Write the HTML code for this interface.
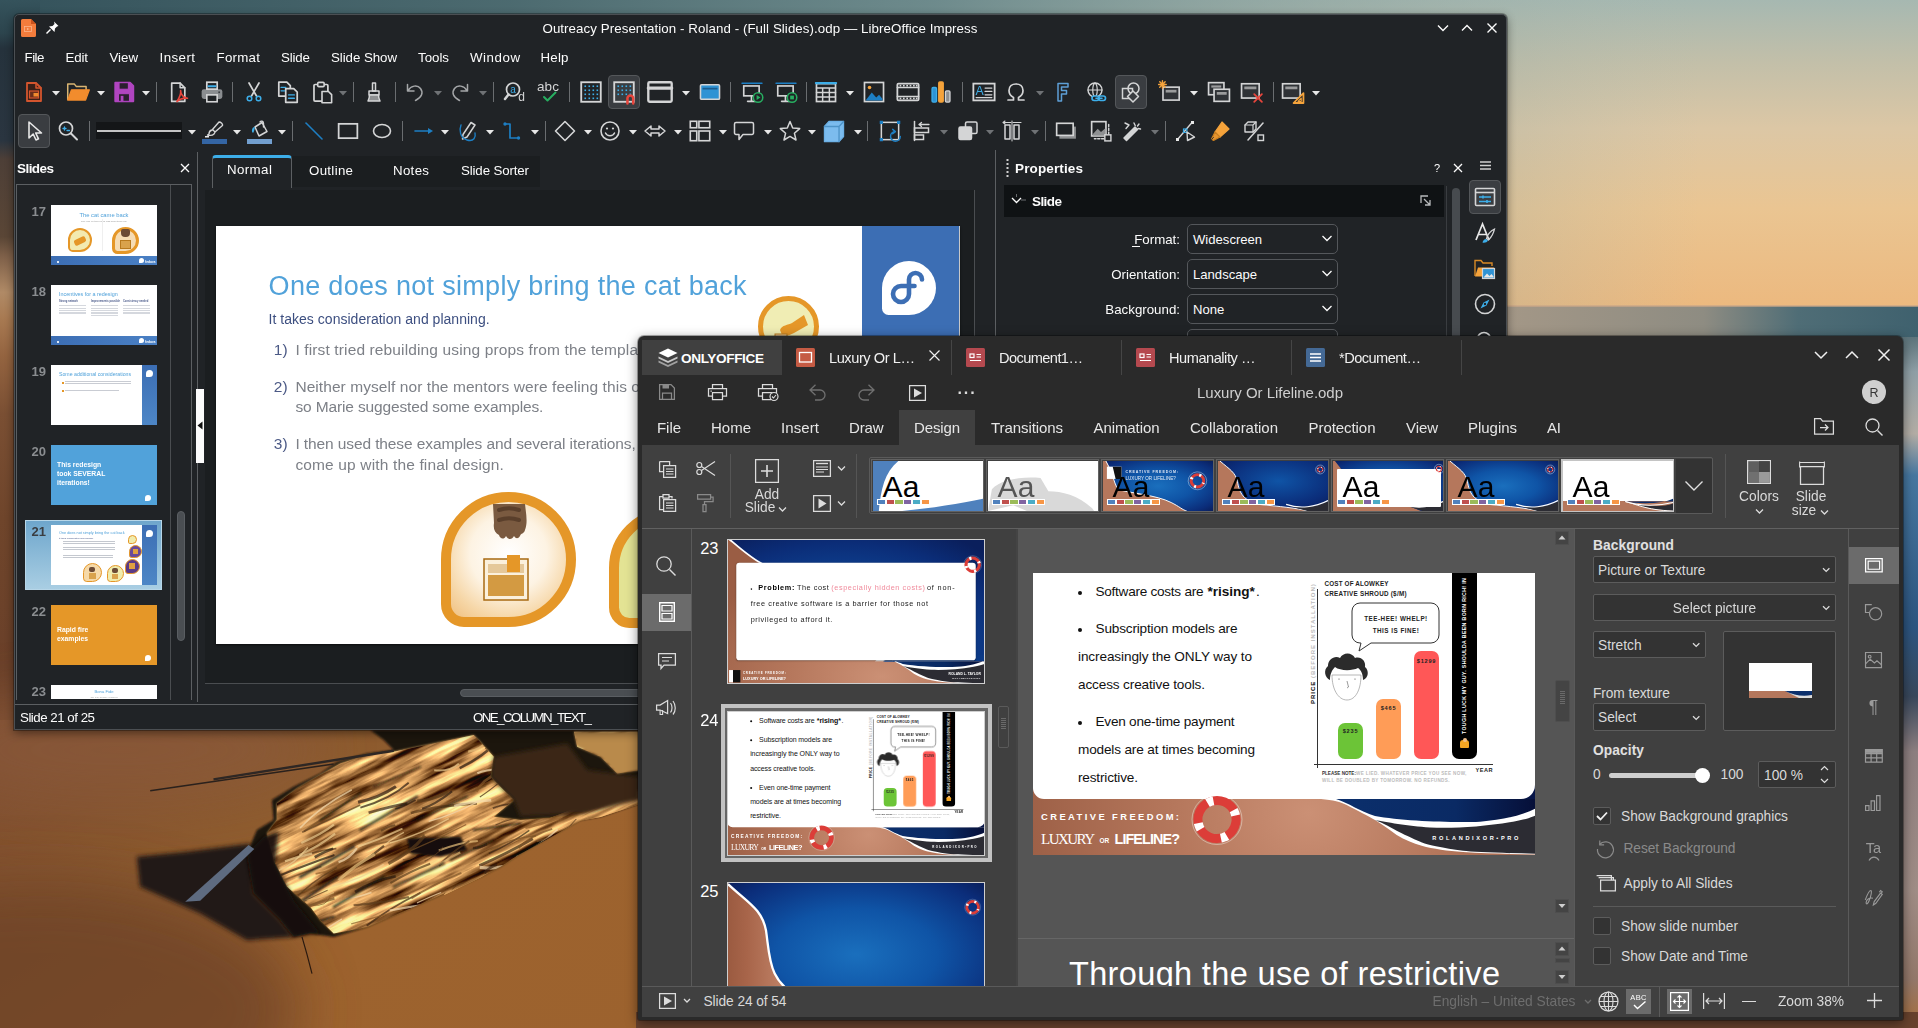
<!DOCTYPE html>
<html lang="en"><head><meta charset="utf-8"><title>Desktop</title>
<style>html,body{margin:0;padding:0;background:#6b4a30;}#root{position:relative;width:1918px;height:1028px;overflow:hidden;font-family:"Liberation Sans",sans-serif;}#root *{box-sizing:border-box;}svg{overflow:visible}</style></head>
<body><div id="root">
<svg style="position:absolute;left:0px;top:0px;" width="1918" height="1028" viewBox="0 0 1918 1028"><defs>
<linearGradient id="sky" x1="0" y1="0" x2="0" y2="1">
 <stop offset="0" stop-color="#a6b8b1"/><stop offset=".2" stop-color="#c2bfa9"/><stop offset=".42" stop-color="#dcc7a5"/>
 <stop offset=".68" stop-color="#eac592"/><stop offset="1" stop-color="#ecb97f"/></linearGradient>
<linearGradient id="skyL" x1="0" y1="0" x2="1" y2="0">
 <stop offset="0" stop-color="#34525b" stop-opacity="1"/><stop offset=".3" stop-color="#47666c" stop-opacity=".95"/>
 <stop offset=".55" stop-color="#5f7f83" stop-opacity=".8"/><stop offset=".8" stop-color="#8da39f" stop-opacity=".45"/>
 <stop offset="1" stop-color="#a6b8b1" stop-opacity="0"/></linearGradient>
<linearGradient id="sand" x1="0" y1="0" x2="1" y2=".25">
 <stop offset="0" stop-color="#7d4d31"/><stop offset=".1" stop-color="#83522f"/><stop offset=".2" stop-color="#8d5b2e"/><stop offset=".34" stop-color="#9d632e"/><stop offset="1" stop-color="#9a602e"/></linearGradient>
<linearGradient id="sandL" x1="0" y1="0" x2="0" y2="1">
 <stop offset="0" stop-color="#9a6f4c"/><stop offset=".25" stop-color="#8e5b37"/><stop offset="1" stop-color="#6d3f27"/></linearGradient>
<linearGradient id="sea" x1="0" y1="0" x2="1" y2="0">
 <stop offset="0" stop-color="#a59887"/><stop offset=".5" stop-color="#8e8c82"/><stop offset=".72" stop-color="#4f6d76"/><stop offset="1" stop-color="#3f616e"/></linearGradient>
<linearGradient id="wood" x1="0" y1="0" x2="1" y2="0">
 <stop offset="0" stop-color="#b88240"/><stop offset=".5" stop-color="#d2a05a"/><stop offset="1" stop-color="#c08c48"/></linearGradient>
<linearGradient id="rstrip" x1="0" y1="0" x2="0" y2="1">
 <stop offset="0" stop-color="#5d747b"/><stop offset=".05" stop-color="#8f9fa6"/><stop offset=".14" stop-color="#b3ada5"/>
 <stop offset=".2" stop-color="#4677a0"/><stop offset=".42" stop-color="#2d5580"/><stop offset=".52" stop-color="#39485c"/>
 <stop offset=".6" stop-color="#8d7f80"/><stop offset=".8" stop-color="#a08d86"/><stop offset=".93" stop-color="#94786a"/><stop offset="1" stop-color="#a86f3c"/></linearGradient>
<filter id="b2" x="-20%" y="-20%" width="140%" height="140%"><feGaussianBlur stdDeviation="2"/></filter><filter id="b05"><feGaussianBlur stdDeviation="0.500"/></filter><filter id="b30" x="-60%" y="-60%" width="220%" height="220%"><feGaussianBlur stdDeviation="30"/></filter>
<filter id="b5"><feGaussianBlur stdDeviation="5"/></filter>
<filter id="b1"><feGaussianBlur stdDeviation="0.8"/></filter>
</defs><rect x="0" y="0" width="1918" height="306" fill="url(#sky)"/><rect x="0" y="0" width="1700" height="306" fill="url(#skyL)"/><rect x="1490" y="306" width="428" height="40" fill="url(#sea)"/><rect x="1490" y="305" width="428" height="2" fill="#caa788" opacity=".7"/><linearGradient id="lstrip" x1="0" y1="0" x2="0" y2="1"><stop offset="0" stop-color="#35535c"/><stop offset=".045" stop-color="#2c444d"/><stop offset=".065" stop-color="#25323c"/><stop offset=".19" stop-color="#2a3540"/><stop offset=".215" stop-color="#4d3f37"/><stop offset=".32" stop-color="#5a4636"/><stop offset=".345" stop-color="#7d5f48"/><stop offset=".395" stop-color="#b08a66"/><stop offset=".43" stop-color="#a87a52"/><stop offset=".48" stop-color="#946440"/><stop offset=".56" stop-color="#7a4f33"/><stop offset=".7" stop-color="#6f452b"/><stop offset=".9" stop-color="#6a4029"/><stop offset="1" stop-color="#77482c"/></linearGradient><rect x="0" y="0" width="40" height="740" fill="url(#lstrip)"/><rect x="0" y="720" width="1918" height="308" fill="url(#sand)"/><ellipse cx="40" cy="1010" rx="260" ry="130" fill="#6a3f28" opacity=".75" filter="url(#b30)"/><ellipse cx="120" cy="750" rx="200" ry="50" fill="#8c5c3c" opacity=".6" filter="url(#b30)"/><rect x="1880" y="337" width="38" height="691" fill="url(#rstrip)"/><rect x="636" y="1012" width="1282" height="16" fill="#68422d"/><polygon points="136.8,856.8 186.9,851.8 250.3,843.5 253.6,893.5 280.3,920.2 293.6,936.9 246.9,940.2 200.2,913.5 140.1,886.8" fill="#1f1813" opacity=".95" filter="url(#b2)"/><polygon points="370.4,730.0 640.0,730.0 640.0,803.4 600.6,816.8 580.6,820.1 550.6,836.8 520.5,853.5 500.5,866.8 480.5,876.8 443.8,893.5 413.7,906.9 367.0,926.9 333.7,936.9 310.3,933.5 293.6,936.9 280.3,920.2 266.9,906.9 253.6,893.5 250.3,876.8 246.9,853.5 256.9,830.1 273.6,820.1 271.9,800.1 293.6,786.7 320.3,773.4 337.0,761.7 367.0,753.4 393.7,750.0 383.7,740.0" fill="#1a130d" filter="url(#b1)"/><linearGradient id="wood2" x1="0" y1="0" x2=".3" y2="1"><stop offset="0" stop-color="#dcab66"/><stop offset=".5" stop-color="#c89448"/><stop offset="1" stop-color="#a8702c"/></linearGradient><polygon points="393.7,751.7 433.8,743.4 473.8,735.0 493.8,756.7 490.5,776.7 500.5,786.7 513.8,800.1 493.8,816.8 520.5,820.1 567.2,816.8 580.6,820.1 550.6,836.8 520.5,853.5 500.5,866.8 480.5,876.8 443.8,893.5 413.7,906.9 367.0,926.9 333.7,933.5 320.3,920.2 310.3,906.9 287.0,886.8 273.6,860.1 266.9,833.4 276.9,820.1 276.9,803.4 297.0,788.4 320.3,775.1 340.3,763.4 367.0,755.0" fill="url(#wood2)" filter="url(#b1)"/><filter id="woodtex" x="0" y="0" width="100%" height="100%" color-interpolation-filters="sRGB"><feTurbulence type="fractalNoise" baseFrequency="0.011 0.1" numOctaves="4" seed="5" result="n"/><feColorMatrix type="matrix" values="2.5 0 0 0 -0.52  2.2 0 0 0 -0.58  1.6 0 0 0 -0.5  0 0 0 0 1"/></filter><polygon points="443.8,895.2 480.5,877.5 520.5,854.1 550.6,837.5 580.6,820.8 600.6,817.1 640.0,804.1 640.0,788.4 587.3,803.4 540.5,821.8 500.5,841.8 467.1,861.8" fill="#c89448"/><clipPath id="woodclip0"><polygon points="393.7,751.7 433.8,743.4 473.8,735.0 493.8,756.7 490.5,776.7 500.5,786.7 513.8,800.1 493.8,816.8 520.5,820.1 567.2,816.8 580.6,820.1 550.6,836.8 520.5,853.5 500.5,866.8 480.5,876.8 443.8,893.5 413.7,906.9 367.0,926.9 333.7,933.5 320.3,920.2 310.3,906.9 287.0,886.8 273.6,860.1 266.9,833.4 276.9,820.1 276.9,803.4 297.0,788.4 320.3,775.1 340.3,763.4 367.0,755.0"/><polygon points="443.8,895.2 480.5,877.5 520.5,854.1 550.6,837.5 580.6,820.8 600.6,817.1 640.0,804.1 640.0,788.4 587.3,803.4 540.5,821.8 500.5,841.8 467.1,861.8"/><polygon points="573.9,731.7 640.0,731.7 640.0,770.1 617.3,773.4 600.6,756.7 577.2,746.7"/></clipPath><g clip-path="url(#woodclip0)"><g transform="rotate(-26 450 850)"><rect x="120" y="620" width="700" height="440" filter="url(#woodtex)" opacity=".92"/></g></g><polygon points="493.8,756.7 567.2,743.4 587.3,770.1 640.0,776.7 640.0,800.1 583.9,813.4 520.5,816.8 513.8,800.1 500.5,786.7 490.5,776.7" fill="#3a2618" filter="url(#b2)"/><polygon points="573.9,731.7 640.0,731.7 640.0,770.1 617.3,773.4 600.6,756.7 577.2,746.7" fill="#b98a4c" filter="url(#b1)"/><polygon points="263.6,836.8 278.6,831.8 275.3,863.5 293.6,900.2 320.3,933.5 310.3,933.5 293.6,936.9 280.3,920.2 253.6,893.5 246.9,853.5" fill="#140e0a" opacity=".92" filter="url(#b2)"/><polygon points="407.1,838.5 460.5,836.8 467.1,850.1 440.4,856.8 410.4,853.5" fill="#120c08" filter="url(#b1)"/><clipPath id="woodclip"><polygon points="393.7,751.7 433.8,743.4 473.8,735.0 493.8,756.7 490.5,776.7 500.5,786.7 513.8,800.1 493.8,816.8 520.5,820.1 567.2,816.8 580.6,820.1 550.6,836.8 520.5,853.5 500.5,866.8 480.5,876.8 443.8,893.5 413.7,906.9 367.0,926.9 333.7,933.5 320.3,920.2 310.3,906.9 287.0,886.8 273.6,860.1 266.9,833.4 276.9,820.1 276.9,803.4 297.0,788.4 320.3,775.1 340.3,763.4 367.0,755.0"/></clipPath><g clip-path="url(#woodclip)" filter="url(#b05)"><path d="M409.5,851.1 Q438.0,839.4 466.2,824.5" stroke="#7a5226" stroke-width="1.4" fill="none" opacity=".7"/><path d="M511.7,743.5 Q522.3,734.0 535.3,725.7" stroke="#3a2413" stroke-width="2.3" fill="none" opacity=".7"/><path d="M495.5,824.9 Q514.5,816.4 540.9,814.1" stroke="#5a3a1c" stroke-width="1.1" fill="none" opacity=".7"/><path d="M282.6,894.7 Q300.6,892.5 318.6,886.4" stroke="#7a5226" stroke-width="2.4" fill="none" opacity=".7"/><path d="M410.9,812.9 Q441.7,804.9 476.9,803.4" stroke="#5a3a1c" stroke-width="2.6" fill="none" opacity=".7"/><path d="M360.4,807.6 Q390.0,799.4 408.7,782.8" stroke="#2a1a0e" stroke-width="1.9" fill="none" opacity=".7"/><path d="M273.8,864.7 Q302.6,848.0 329.9,838.6" stroke="#8a5a28" stroke-width="1.9" fill="none" opacity=".7"/><path d="M476.3,791.7 Q483.3,779.1 499.4,772.6" stroke="#8a5a28" stroke-width="2.7" fill="none" opacity=".7"/><path d="M304.0,831.3 Q323.3,818.3 350.1,799.8" stroke="#7a5226" stroke-width="2.0" fill="none" opacity=".7"/><path d="M312.9,905.2 Q326.1,906.6 330.4,896.5" stroke="#7a5226" stroke-width="1.0" fill="none" opacity=".7"/><path d="M451.6,890.9 Q453.3,886.1 463.5,882.8" stroke="#5a3a1c" stroke-width="1.1" fill="none" opacity=".7"/><path d="M276.5,917.0 Q303.0,900.5 327.6,890.2" stroke="#5a3a1c" stroke-width="1.2" fill="none" opacity=".7"/><path d="M454.2,806.1 Q468.3,801.7 491.2,800.1" stroke="#f6ddb0" stroke-width="2.8" fill="none" opacity=".7"/><path d="M462.0,794.6 Q475.5,790.7 485.9,785.6" stroke="#7a5226" stroke-width="1.3" fill="none" opacity=".7"/><path d="M479.9,796.9 Q489.9,790.6 510.9,773.1" stroke="#3a2413" stroke-width="1.2" fill="none" opacity=".7"/><path d="M345.2,899.0 Q354.5,898.5 371.5,892.6" stroke="#f6ddb0" stroke-width="1.6" fill="none" opacity=".7"/><path d="M294.3,858.1 Q320.3,849.8 336.4,848.6" stroke="#5a3a1c" stroke-width="1.6" fill="none" opacity=".7"/><path d="M278.6,870.5 Q293.6,864.7 307.8,847.6" stroke="#f0cf92" stroke-width="1.6" fill="none" opacity=".7"/><path d="M301.3,843.0 Q322.7,833.5 333.9,824.6" stroke="#f0cf92" stroke-width="2.3" fill="none" opacity=".7"/><path d="M381.0,830.7 Q390.8,825.8 395.1,825.3" stroke="#5a3a1c" stroke-width="2.1" fill="none" opacity=".7"/><path d="M573.7,713.4 Q599.1,705.7 614.5,701.4" stroke="#f0cf92" stroke-width="2.7" fill="none" opacity=".7"/><path d="M479.4,865.6 Q507.0,853.6 532.8,838.7" stroke="#3a2413" stroke-width="2.9" fill="none" opacity=".7"/><path d="M388.4,863.5 Q411.2,852.3 424.8,835.7" stroke="#5a3a1c" stroke-width="3.2" fill="none" opacity=".7"/><path d="M390.3,883.0 Q410.4,871.1 430.2,863.7" stroke="#5a3a1c" stroke-width="2.1" fill="none" opacity=".7"/><path d="M300.0,828.0 Q320.0,806.5 351.8,789.8" stroke="#f6ddb0" stroke-width="1.6" fill="none" opacity=".7"/><path d="M477.3,773.3 Q485.1,770.0 499.2,769.0" stroke="#f6ddb0" stroke-width="2.1" fill="none" opacity=".7"/><path d="M348.9,888.0 Q374.5,881.3 403.0,872.6" stroke="#7a5226" stroke-width="2.9" fill="none" opacity=".7"/><path d="M368.6,812.7 Q393.5,805.5 407.4,803.6" stroke="#3a2413" stroke-width="2.6" fill="none" opacity=".7"/><path d="M324.4,874.4 Q336.4,868.8 347.9,859.0" stroke="#8a5a28" stroke-width="1.8" fill="none" opacity=".7"/><path d="M488.7,853.6 Q510.3,844.1 529.3,830.4" stroke="#3a2413" stroke-width="1.6" fill="none" opacity=".7"/><path d="M358.0,846.5 Q376.6,840.8 402.5,828.6" stroke="#f0cf92" stroke-width="1.9" fill="none" opacity=".7"/><path d="M353.6,905.2 Q382.8,903.0 408.9,897.0" stroke="#5a3a1c" stroke-width="2.0" fill="none" opacity=".7"/><path d="M516.1,856.9 Q539.4,846.2 557.6,829.3" stroke="#f6ddb0" stroke-width="1.6" fill="none" opacity=".7"/><path d="M434.2,770.2 Q450.0,771.8 458.8,763.6" stroke="#f0cf92" stroke-width="1.9" fill="none" opacity=".7"/><path d="M299.8,949.6 Q325.5,928.5 341.9,919.2" stroke="#f6ddb0" stroke-width="1.4" fill="none" opacity=".7"/><path d="M438.8,850.5 Q460.1,842.2 477.8,840.9" stroke="#e8c07c" stroke-width="2.0" fill="none" opacity=".7"/><path d="M490.4,849.7 Q511.8,837.7 535.9,835.7" stroke="#7a5226" stroke-width="1.5" fill="none" opacity=".7"/><path d="M366.7,925.8 Q388.5,908.5 420.4,892.7" stroke="#3a2413" stroke-width="1.8" fill="none" opacity=".7"/><path d="M438.9,865.9 Q448.6,853.9 469.4,841.0" stroke="#5a3a1c" stroke-width="1.9" fill="none" opacity=".7"/><path d="M479.8,867.4 Q498.7,870.1 517.9,862.0" stroke="#f6ddb0" stroke-width="3.1" fill="none" opacity=".7"/><path d="M299.4,854.9 Q321.4,845.0 335.1,833.7" stroke="#f0cf92" stroke-width="2.2" fill="none" opacity=".7"/><path d="M367.2,846.1 Q391.6,840.9 424.6,834.7" stroke="#7a5226" stroke-width="1.7" fill="none" opacity=".7"/><path d="M355.6,866.8 Q364.1,862.0 384.0,845.9" stroke="#3a2413" stroke-width="2.3" fill="none" opacity=".7"/><path d="M428.6,821.4 Q450.6,816.0 480.6,800.4" stroke="#f6ddb0" stroke-width="1.2" fill="none" opacity=".7"/><path d="M411.4,898.4 Q431.9,884.9 461.4,872.9" stroke="#7a5226" stroke-width="2.0" fill="none" opacity=".7"/><path d="M518.6,848.1 Q529.7,835.6 552.2,828.8" stroke="#7a5226" stroke-width="1.9" fill="none" opacity=".7"/><path d="M484.4,873.5 Q488.6,867.4 496.9,864.8" stroke="#3a2413" stroke-width="2.5" fill="none" opacity=".7"/><path d="M459.7,768.1 Q483.3,757.2 502.1,737.2" stroke="#2a1a0e" stroke-width="2.6" fill="none" opacity=".7"/><path d="M280.6,918.2 Q307.9,904.8 334.4,898.3" stroke="#7a5226" stroke-width="2.9" fill="none" opacity=".7"/><path d="M338.5,880.4 Q354.5,865.2 374.8,854.4" stroke="#e8c07c" stroke-width="3.0" fill="none" opacity=".7"/><path d="M550.7,742.7 Q578.9,731.1 616.0,729.3" stroke="#f0cf92" stroke-width="3.0" fill="none" opacity=".7"/><path d="M390.1,843.0 Q421.0,834.4 448.8,818.6" stroke="#f0cf92" stroke-width="1.4" fill="none" opacity=".7"/><path d="M302.5,900.0 Q318.3,899.3 334.0,892.3" stroke="#e8c07c" stroke-width="1.3" fill="none" opacity=".7"/><path d="M424.6,861.2 Q437.0,855.4 443.1,846.8" stroke="#5a3a1c" stroke-width="1.1" fill="none" opacity=".7"/><path d="M545.4,780.2 Q560.8,778.4 564.3,766.3" stroke="#f0cf92" stroke-width="2.8" fill="none" opacity=".7"/><path d="M302.2,832.3 Q330.8,818.9 360.2,805.0" stroke="#5a3a1c" stroke-width="1.7" fill="none" opacity=".7"/><path d="M402.8,859.6 Q408.9,860.3 416.2,855.3" stroke="#7a5226" stroke-width="1.4" fill="none" opacity=".7"/><path d="M395.3,808.7 Q400.5,808.4 415.6,799.9" stroke="#3a2413" stroke-width="1.7" fill="none" opacity=".7"/><path d="M536.6,841.2 Q571.8,833.1 595.5,817.6" stroke="#7a5226" stroke-width="2.1" fill="none" opacity=".7"/><path d="M351.2,923.9 Q374.7,917.5 402.4,910.1" stroke="#8a5a28" stroke-width="1.3" fill="none" opacity=".7"/><path d="M384.7,845.0 Q392.4,838.3 403.9,832.4" stroke="#f0cf92" stroke-width="1.2" fill="none" opacity=".7"/><path d="M276.8,882.8 Q304.6,872.3 321.4,866.6" stroke="#7a5226" stroke-width="1.6" fill="none" opacity=".7"/><path d="M338.5,862.2 Q350.0,858.3 356.8,848.1" stroke="#f6ddb0" stroke-width="2.4" fill="none" opacity=".7"/><path d="M567.9,709.0 Q590.1,705.7 612.3,696.0" stroke="#2a1a0e" stroke-width="2.0" fill="none" opacity=".7"/><path d="M468.2,751.7 Q479.9,750.3 491.4,737.7" stroke="#e8c07c" stroke-width="2.2" fill="none" opacity=".7"/><path d="M444.2,893.8 Q469.2,893.5 490.2,882.2" stroke="#5a3a1c" stroke-width="2.2" fill="none" opacity=".7"/><path d="M389.6,910.5 Q407.6,907.0 423.2,905.2" stroke="#f6ddb0" stroke-width="2.2" fill="none" opacity=".7"/><path d="M422.1,808.7 Q434.3,805.2 452.1,791.4" stroke="#2a1a0e" stroke-width="2.1" fill="none" opacity=".7"/><path d="M472.9,848.0 Q478.9,848.3 487.1,844.1" stroke="#3a2413" stroke-width="2.4" fill="none" opacity=".7"/><path d="M289.5,871.8 Q310.4,864.6 321.7,859.2" stroke="#e8c07c" stroke-width="1.2" fill="none" opacity=".7"/><path d="M417.0,902.9 Q434.7,894.7 441.2,892.5" stroke="#f6ddb0" stroke-width="1.3" fill="none" opacity=".7"/><path d="M485.7,749.2 Q496.0,737.1 514.5,728.2" stroke="#3a2413" stroke-width="1.8" fill="none" opacity=".7"/><path d="M315.6,873.8 Q339.9,870.0 358.4,858.6" stroke="#8a5a28" stroke-width="1.8" fill="none" opacity=".7"/><path d="M314.7,857.2 Q325.4,851.3 333.1,848.8" stroke="#2a1a0e" stroke-width="2.7" fill="none" opacity=".7"/><path d="M355.1,892.0 Q371.7,881.1 395.7,876.3" stroke="#2a1a0e" stroke-width="2.7" fill="none" opacity=".7"/><path d="M567.8,828.2 Q588.4,803.7 614.8,790.5" stroke="#3a2413" stroke-width="1.0" fill="none" opacity=".7"/><path d="M285.0,861.4 Q300.2,856.0 312.2,853.7" stroke="#f0cf92" stroke-width="2.2" fill="none" opacity=".7"/><path d="M417.3,801.0 Q431.9,800.5 447.8,792.2" stroke="#5a3a1c" stroke-width="2.8" fill="none" opacity=".7"/><path d="M525.3,827.6 Q541.5,824.3 560.9,817.3" stroke="#8a5a28" stroke-width="2.8" fill="none" opacity=".7"/><path d="M570.7,748.2 Q589.6,737.4 611.6,736.3" stroke="#f0cf92" stroke-width="1.9" fill="none" opacity=".7"/><path d="M536.4,730.5 Q544.2,731.0 552.9,723.8" stroke="#f6ddb0" stroke-width="2.8" fill="none" opacity=".7"/><path d="M276.4,876.9 Q308.6,863.9 334.4,855.1" stroke="#2a1a0e" stroke-width="2.1" fill="none" opacity=".7"/><path d="M538.4,748.3 Q558.7,737.5 580.5,724.4" stroke="#5a3a1c" stroke-width="1.7" fill="none" opacity=".7"/><path d="M544.6,808.0 Q554.2,808.1 570.6,797.0" stroke="#2a1a0e" stroke-width="2.0" fill="none" opacity=".7"/><path d="M492.8,808.3 Q500.2,804.8 510.1,804.1" stroke="#3a2413" stroke-width="1.8" fill="none" opacity=".7"/><path d="M332.2,886.0 Q361.0,879.8 383.7,864.4" stroke="#f0cf92" stroke-width="1.4" fill="none" opacity=".7"/><path d="M358.1,802.2 Q378.8,798.0 395.9,786.5" stroke="#2a1a0e" stroke-width="3.1" fill="none" opacity=".7"/><path d="M292.8,901.2 Q310.1,882.2 336.9,867.6" stroke="#5a3a1c" stroke-width="1.6" fill="none" opacity=".7"/><path d="M281.4,920.5 Q287.0,921.5 299.4,916.1" stroke="#8a5a28" stroke-width="1.5" fill="none" opacity=".7"/><path d="M430.2,869.2 Q445.2,861.3 460.3,852.5" stroke="#e8c07c" stroke-width="2.5" fill="none" opacity=".7"/></g><g clip-path="url(#woodclip)" filter="url(#b1)"><path d="M300.3,876.8 L353.7,846.8" stroke="#1c120a" stroke-width="3.0" stroke-linecap="round" opacity=".85"/><path d="M293.6,906.9 L337.0,876.8" stroke="#1c120a" stroke-width="2.7" stroke-linecap="round" opacity=".85"/><path d="M333.7,906.9 L383.7,876.8" stroke="#1c120a" stroke-width="2.3" stroke-linecap="round" opacity=".85"/><path d="M360.4,830.1 L417.1,796.7" stroke="#1c120a" stroke-width="2.3" stroke-linecap="round" opacity=".85"/><path d="M417.1,820.1 L467.1,796.7" stroke="#1c120a" stroke-width="2.0" stroke-linecap="round" opacity=".85"/><path d="M320.3,820.1 L360.4,793.4" stroke="#1c120a" stroke-width="2.0" stroke-linecap="round" opacity=".85"/><path d="M393.7,886.8 L443.8,863.5" stroke="#1c120a" stroke-width="2.3" stroke-linecap="round" opacity=".85"/><path d="M450.5,860.1 L493.8,840.1" stroke="#1c120a" stroke-width="2.0" stroke-linecap="round" opacity=".85"/><path d="M373.7,786.7 L420.4,766.7" stroke="#1c120a" stroke-width="1.7" stroke-linecap="round" opacity=".85"/><path d="M473.8,830.1 L520.5,823.4" stroke="#1c120a" stroke-width="2.0" stroke-linecap="round" opacity=".85"/><path d="M300.3,926.9 L333.7,916.9" stroke="#1c120a" stroke-width="2.3" stroke-linecap="round" opacity=".85"/></g><polygon points="185.2,901.8 248.6,845.1 254.3,849.1 200.2,900.8" fill="#5e6b80"/><path d="M150.2,790.7 L333.7,764.0" stroke="#2a211c" stroke-width="1.600"/><path d="M213.5,779.4 L393.7,750.7" stroke="#2e2724" stroke-width="2.400"/><path d="M302.0,936.9 Q307.0,953.6 312.0,973.6" stroke="#2a1a10" stroke-width="1.200" fill="none"/></svg>
<div style="position:absolute;left:14px;top:14px;width:1493px;height:716px;background:#202326;border:1px solid #4b4f53;border-radius:5px 5px 0 0;box-shadow:0 0 0 1px rgba(0,0,0,.3),0 3px 10px rgba(0,0,0,.45);"></div><svg style="position:absolute;left:21px;top:19px;" width="15" height="18" viewBox="0 0 15 18"><path d="M0 1.500a1.500 1.500 0 011.500-1.500H10l5 5v11.500a1.500 1.500 0 01-1.500 1.500h-12A1.500 1.500 0 010 16.500z" fill="#f37c3c"/><path d="M10 0l5 5h-5z" fill="#c9521c"/><rect x="3.500" y="7.500" width="7" height="5" fill="none" stroke="#f9b48c" stroke-width=".8"/><path d="M6 8.700v2.600l2.200-1.300z" fill="#f9b48c"/></svg><svg style="position:absolute;left:46px;top:21px;" width="13" height="13" viewBox="0 0 13 13"><path d="M8 0.500l4.500 4.500-1.500.5-2 2-.5 3.500L3 5.500 6.500 5l2-2z" fill="#fff"/><path d="M4.500 8.500L0.500 12.500" stroke="#fff" stroke-width="1.500"/></svg><span style="position:absolute;left:260px;width:1000px;text-align:center;top:19px;font:400 13.3px/19px 'Liberation Sans',sans-serif;color:#fcfcfc;white-space:pre;letter-spacing:0.072px;">Outreacy Presentation - Roland - (Full Slides).odp — LibreOffice Impress</span><svg style="position:absolute;left:1435px;top:20px;" width="16" height="16" viewBox="0 0 16 16"><path d="M-5 -2.500l5 5 5-5" stroke="#fcfcfc" stroke-width="1.400" fill="none" transform="translate(8 8)"/></svg><svg style="position:absolute;left:1459px;top:20px;" width="16" height="16" viewBox="0 0 16 16"><path d="M-5 2.500l5-5 5 5" stroke="#fcfcfc" stroke-width="1.400" fill="none" transform="translate(8 8)"/></svg><svg style="position:absolute;left:1484px;top:20px;" width="16" height="16" viewBox="0 0 16 16"><path d="M-4.500 -4.500l9 9M4.500 -4.500l-9 9" stroke="#fcfcfc" stroke-width="1.400" fill="none" transform="translate(8 8)"/></svg><span style="position:absolute;left:24.5px;top:48px;font:400 13.3px/19px 'Liberation Sans',sans-serif;color:#fcfcfc;white-space:pre;letter-spacing:-0.479px;">File</span><span style="position:absolute;left:65.5px;top:48px;font:400 13.3px/19px 'Liberation Sans',sans-serif;color:#fcfcfc;white-space:pre;letter-spacing:-0.141px;">Edit</span><span style="position:absolute;left:109.5px;top:48px;font:400 13.3px/19px 'Liberation Sans',sans-serif;color:#fcfcfc;white-space:pre;letter-spacing:-0.031px;">View</span><span style="position:absolute;left:159.5px;top:48px;font:400 13.3px/19px 'Liberation Sans',sans-serif;color:#fcfcfc;white-space:pre;letter-spacing:0.447px;">Insert</span><span style="position:absolute;left:216.5px;top:48px;font:400 13.3px/19px 'Liberation Sans',sans-serif;color:#fcfcfc;white-space:pre;letter-spacing:0.275px;">Format</span><span style="position:absolute;left:281px;top:48px;font:400 13.3px/19px 'Liberation Sans',sans-serif;color:#fcfcfc;white-space:pre;letter-spacing:-0.145px;">Slide</span><span style="position:absolute;left:331px;top:48px;font:400 13.3px/19px 'Liberation Sans',sans-serif;color:#fcfcfc;white-space:pre;letter-spacing:-0.059px;">Slide Show</span><span style="position:absolute;left:418px;top:48px;font:400 13.3px/19px 'Liberation Sans',sans-serif;color:#fcfcfc;white-space:pre;letter-spacing:-0.012px;">Tools</span><span style="position:absolute;left:470px;top:48px;font:400 13.3px/19px 'Liberation Sans',sans-serif;color:#fcfcfc;white-space:pre;letter-spacing:0.541px;">Window</span><span style="position:absolute;left:540.5px;top:48px;font:400 13.3px/19px 'Liberation Sans',sans-serif;color:#fcfcfc;white-space:pre;letter-spacing:0.214px;">Help</span><svg style="position:absolute;left:22px;top:80px;" width="24" height="24" viewBox="0 0 24 24"><path d="M5 3h9l5 5v13H5z" stroke="#d4552e" stroke-width="1.8" fill="#3a2018" stroke-linejoin="round" stroke-linecap="round" /><path d="M14 3v5h5" stroke="#d4552e" stroke-width="1.5" fill="none" stroke-linejoin="round" stroke-linecap="round" /><rect x="7.5" y="11" width="9" height="7" rx="0" stroke="#d4552e" stroke-width="1.2" fill="#6a2f1c"/><rect x="11.5" y="13" width="5" height="3.5" rx="0" stroke="#f08c2e" stroke-width="0" fill="#f08c2e"/></svg><svg style="position:absolute;left:52px;top:91px;" width="8" height="5" viewBox="0 0 8 5"><path d="M0 0h8L4 4.500z" fill="#e8e8e8"/></svg><svg style="position:absolute;left:66px;top:80px;" width="24" height="24" viewBox="0 0 24 24"><g transform="translate(12 12) scale(1.08) translate(-12 -12)"><path d="M2.500 19V4.500h6l2 2.500h9V10" stroke="#d9b572" stroke-width="1.4" fill="none" stroke-linejoin="round" stroke-linecap="round" /><path d="M2.500 19.500l3.500-9.500h16.500l-3.500 9.500z" stroke="#f28c2d" stroke-width="1.2" fill="#f28c2d" stroke-linejoin="round" stroke-linecap="round" /></g></svg><svg style="position:absolute;left:97px;top:91px;" width="8" height="5" viewBox="0 0 8 5"><path d="M0 0h8L4 4.500z" fill="#e8e8e8"/></svg><svg style="position:absolute;left:112px;top:80px;" width="24" height="24" viewBox="0 0 24 24"><g transform="translate(12 12) scale(1.1) translate(-12 -12)"><path d="M4 3.500h13.500l3 3V20.500H4z" stroke="#b045c0" stroke-width="1.6" fill="#b045c0" stroke-linejoin="round" stroke-linecap="round" /><rect x="7.5" y="3.5" width="8.5" height="6" rx="0" stroke="#b045c0" stroke-width="1" fill="#2a1f2e"/><rect x="7" y="13.5" width="10" height="7" rx="0" stroke="#b045c0" stroke-width="1" fill="#2a1f2e"/><rect x="9" y="15.5" width="2.5" height="5" rx="0" stroke="#b045c0" stroke-width="0" fill="#b045c0"/></g></svg><svg style="position:absolute;left:142px;top:91px;" width="8" height="5" viewBox="0 0 8 5"><path d="M0 0h8L4 4.500z" fill="#e8e8e8"/></svg><div style="position:absolute;left:156px;top:82px;width:1px;height:20px;background:#6a6d70;"></div><svg style="position:absolute;left:166px;top:80px;" width="24" height="24" viewBox="0 0 24 24"><g transform="translate(12 12) scale(1.05) translate(-12 -12)"><path d="M6 3.5h8l4.5 4.5v13H6z" stroke="#d4d5d6" stroke-width="1.6" fill="none" stroke-linejoin="round" stroke-linecap="round" /><path d="M14 3.5V8h4.5" stroke="#d4d5d6" stroke-width="1.4" fill="none" stroke-linejoin="round" stroke-linecap="round" /><path d="M11 21c2-3 4-7 3.5-10.5M11 21c3-2.5 7-3.5 10-3M14.500 10.500c0 4 3 7 6.5 7.5" stroke="#e8453c" stroke-width="1.5" fill="none" stroke-linejoin="round" stroke-linecap="round" /></g></svg><svg style="position:absolute;left:200px;top:80px;" width="24" height="24" viewBox="0 0 24 24"><g transform="translate(12 12) scale(1.15) translate(-12 -12)"><rect x="3" y="9.5" width="18" height="8.5" rx="2" stroke="#d4d5d6" stroke-width="0" fill="#8a8d90"/><rect x="7.5" y="3.5" width="9" height="6" rx="0" stroke="#d4d5d6" stroke-width="1.5" fill="#202326"/><path d="M9 7h6" stroke="#3daee9" stroke-width="1.8" fill="none" stroke-linejoin="round" stroke-linecap="round" /><rect x="7.5" y="14.5" width="9" height="6" rx="0" stroke="#d4d5d6" stroke-width="1.4" fill="#202326"/><rect x="17.5" y="11.5" width="1.5" height="1.5" rx="0" stroke="#d4d5d6" stroke-width="0" fill="#3a3d41"/></g></svg><div style="position:absolute;left:232px;top:82px;width:1px;height:20px;background:#6a6d70;"></div><svg style="position:absolute;left:242px;top:80px;" width="24" height="24" viewBox="0 0 24 24"><path d="M7 3l7.5 13M17 3L9.5 16" stroke="#d4d5d6" stroke-width="1.7" fill="none" stroke-linejoin="round" stroke-linecap="round" /><circle cx="7.5" cy="18.5" r="2.3" stroke="#3daee9" stroke-width="1.5" fill="none"/><circle cx="16.5" cy="18.5" r="2.3" stroke="#3daee9" stroke-width="1.5" fill="none"/></svg><svg style="position:absolute;left:276px;top:80px;" width="24" height="24" viewBox="0 0 24 24"><g transform="translate(12 12) scale(1.15) translate(-12 -12)"><path d="M4 3.500h7l3 3v9H4z" stroke="#d4d5d6" stroke-width="1.5" fill="none" stroke-linejoin="round" stroke-linecap="round" /><path d="M10 9h7l3 3v9H10z" stroke="#d4d5d6" stroke-width="1.5" fill="#202326" stroke-linejoin="round" stroke-linecap="round" /><path d="M12.500 14.500h5M12.500 17.500h5" stroke="#3daee9" stroke-width="1.3" fill="none" stroke-linejoin="round" stroke-linecap="round" /><path d="M6 8h4M6 11h3" stroke="#3daee9" stroke-width="1.2" fill="none" stroke-linejoin="round" stroke-linecap="round" /></g></svg><svg style="position:absolute;left:310px;top:80px;" width="24" height="24" viewBox="0 0 24 24"><g transform="translate(12 12) scale(1.07) translate(-12 -12)"><rect x="4.5" y="5" width="13" height="15.5" rx="1" stroke="#d4d5d6" stroke-width="1.6" fill="none"/><rect x="8" y="3" width="6" height="4" rx="1" stroke="#d4d5d6" stroke-width="1.5" fill="#202326"/><path d="M12 11.500h6l3 3V22h-9z" stroke="#d4d5d6" stroke-width="1.5" fill="#202326" stroke-linejoin="round" stroke-linecap="round" /></g></svg><svg style="position:absolute;left:339px;top:91px;" width="8" height="5" viewBox="0 0 8 5"><path d="M0 0h8L4 4.500z" fill="#6f7275"/></svg><div style="position:absolute;left:353px;top:82px;width:1px;height:20px;background:#6a6d70;"></div><svg style="position:absolute;left:362px;top:80px;" width="24" height="24" viewBox="0 0 24 24"><path d="M10.500 3h3v8h-3z" stroke="#d4d5d6" stroke-width="1.5" fill="none" stroke-linejoin="round" stroke-linecap="round" /><path d="M7 11h10v4H7z" stroke="#d4d5d6" stroke-width="1.5" fill="none" stroke-linejoin="round" stroke-linecap="round" /><path d="M6 21c1-2 1.500-4 1.500-6h9c0 2 .5 4 1.500 6z" stroke="#d4d5d6" stroke-width="1.5" fill="#8e9092" stroke-linejoin="round" stroke-linecap="round" /></svg><div style="position:absolute;left:395px;top:82px;width:1px;height:20px;background:#6a6d70;"></div><svg style="position:absolute;left:403px;top:80px;" width="24" height="24" viewBox="0 0 24 24"><path d="M4.500 4.500v6.500h6.500M5 10.500C8 5.500 14.500 4.500 17.500 8.500s1.500 8.500-5 12" stroke="#a4a6a8" stroke-width="1.5" fill="none" stroke-linejoin="round" stroke-linecap="round" /></svg><svg style="position:absolute;left:434px;top:91px;" width="8" height="5" viewBox="0 0 8 5"><path d="M0 0h8L4 4.500z" fill="#6f7275"/></svg><svg style="position:absolute;left:448px;top:80px;" width="24" height="24" viewBox="0 0 24 24"><path d="M19.500 4.500v6.500h-6.500M19 10.500C16 5.500 9.500 4.500 6.500 8.500s-1.500 8.500 5 12" stroke="#a4a6a8" stroke-width="1.5" fill="none" stroke-linejoin="round" stroke-linecap="round" /></svg><svg style="position:absolute;left:479px;top:91px;" width="8" height="5" viewBox="0 0 8 5"><path d="M0 0h8L4 4.500z" fill="#6f7275"/></svg><div style="position:absolute;left:493px;top:82px;width:1px;height:20px;background:#6a6d70;"></div><svg style="position:absolute;left:503px;top:80px;" width="24" height="24" viewBox="0 0 24 24"><circle cx="10" cy="9.5" r="6.5" stroke="#d4d5d6" stroke-width="1.7" fill="none"/><path d="M5.500 14.500L2 19" stroke="#d4d5d6" stroke-width="2.5" fill="none" stroke-linejoin="round" stroke-linecap="round" /><text x="10" y="12.5" font-family="Liberation Sans, sans-serif" font-size="10" font-weight="400" fill="#3daee9" text-anchor="middle">a</text><text x="18.5" y="21" font-family="Liberation Sans, sans-serif" font-size="12" font-weight="400" fill="#d4d5d6" text-anchor="middle">d</text></svg><svg style="position:absolute;left:536px;top:80px;" width="24" height="24" viewBox="0 0 24 24"><text x="12" y="11" font-family="Liberation Sans, sans-serif" font-size="13.5" font-weight="400" fill="#d4d5d6" text-anchor="middle">abc</text><path d="M8 17l3.500 3.500L19.500 12.500" stroke="#27ae60" stroke-width="2" fill="none" stroke-linejoin="round" stroke-linecap="round" /></svg><div style="position:absolute;left:569px;top:82px;width:1px;height:20px;background:#6a6d70;"></div><svg style="position:absolute;left:579px;top:80px;" width="24" height="24" viewBox="0 0 24 24"><g transform="translate(12 12) scale(1.15) translate(-12 -12)"><rect x="3.5" y="3.5" width="17" height="17" rx="0" stroke="#d4d5d6" stroke-width="1.6" fill="none"/><rect x="6.3" y="6.3" width="1.400" height="1.400" fill="#3daee9"/><rect x="6.3" y="9.8" width="1.400" height="1.400" fill="#3daee9"/><rect x="6.3" y="13.3" width="1.400" height="1.400" fill="#3daee9"/><rect x="6.3" y="16.8" width="1.400" height="1.400" fill="#3daee9"/><rect x="9.8" y="6.3" width="1.400" height="1.400" fill="#3daee9"/><rect x="9.8" y="9.8" width="1.400" height="1.400" fill="#3daee9"/><rect x="9.8" y="13.3" width="1.400" height="1.400" fill="#3daee9"/><rect x="9.8" y="16.8" width="1.400" height="1.400" fill="#3daee9"/><rect x="13.3" y="6.3" width="1.400" height="1.400" fill="#3daee9"/><rect x="13.3" y="9.8" width="1.400" height="1.400" fill="#3daee9"/><rect x="13.3" y="13.3" width="1.400" height="1.400" fill="#3daee9"/><rect x="13.3" y="16.8" width="1.400" height="1.400" fill="#3daee9"/><rect x="16.8" y="6.3" width="1.400" height="1.400" fill="#3daee9"/><rect x="16.8" y="9.8" width="1.400" height="1.400" fill="#3daee9"/><rect x="16.8" y="13.3" width="1.400" height="1.400" fill="#3daee9"/><rect x="16.8" y="16.8" width="1.400" height="1.400" fill="#3daee9"/></g></svg><div style="position:absolute;left:608px;top:75px;width:32px;height:34px;background:#3a3d41;border:1px solid #54575a;border-radius:4px;"></div><svg style="position:absolute;left:612px;top:80px;" width="24" height="24" viewBox="0 0 24 24"><g transform="translate(12 12) scale(1.15) translate(-12 -12)"><rect x="3.5" y="3.5" width="17" height="17" rx="0" stroke="#d4d5d6" stroke-width="1.6" fill="none"/><rect x="6.3" y="6.3" width="1.400" height="1.400" fill="#3daee9"/><rect x="6.3" y="9.8" width="1.400" height="1.400" fill="#3daee9"/><rect x="6.3" y="13.3" width="1.400" height="1.400" fill="#3daee9"/><rect x="9.8" y="6.3" width="1.400" height="1.400" fill="#3daee9"/><rect x="9.8" y="9.8" width="1.400" height="1.400" fill="#3daee9"/><rect x="9.8" y="13.3" width="1.400" height="1.400" fill="#3daee9"/><rect x="13.3" y="6.3" width="1.400" height="1.400" fill="#3daee9"/><rect x="13.3" y="9.8" width="1.400" height="1.400" fill="#3daee9"/><rect x="13.3" y="13.3" width="1.400" height="1.400" fill="#3daee9"/><rect x="16.8" y="6.3" width="1.400" height="1.400" fill="#3daee9"/><rect x="16.8" y="9.8" width="1.400" height="1.400" fill="#3daee9"/><rect x="16.8" y="13.3" width="1.400" height="1.400" fill="#3daee9"/><path d="M15 22v-4.500a2.500 2.500 0 015 0V22" stroke="#e8453c" stroke-width="2.2" fill="none" stroke-linejoin="round" stroke-linecap="round" /></g></svg><svg style="position:absolute;left:648px;top:80px;" width="24" height="24" viewBox="0 0 24 24"><g transform="translate(12 12) scale(1.3) translate(-12 -12)"><rect x="3" y="4.5" width="18" height="15" rx="1" stroke="#d4d5d6" stroke-width="1.8" fill="none"/><path d="M3 9h18" stroke="#d4d5d6" stroke-width="2.5" fill="none" stroke-linejoin="round" stroke-linecap="round" /></g></svg><svg style="position:absolute;left:682px;top:91px;" width="8" height="5" viewBox="0 0 8 5"><path d="M0 0h8L4 4.500z" fill="#e8e8e8"/></svg><svg style="position:absolute;left:698px;top:80px;" width="24" height="24" viewBox="0 0 24 24"><g transform="translate(12 12) scale(1.12) translate(-12 -12)"><rect x="3.5" y="5.5" width="17" height="13" rx="1" stroke="#d4d5d6" stroke-width="1.4" fill="#2f93d4"/><path d="M6 9h12" stroke="#1b5d8f" stroke-width="1.5" fill="none" stroke-linejoin="round" stroke-linecap="round" /></g></svg><div style="position:absolute;left:730px;top:82px;width:1px;height:20px;background:#6a6d70;"></div><svg style="position:absolute;left:740px;top:80px;" width="24" height="24" viewBox="0 0 24 24"><g transform="translate(12 12) scale(1.1) translate(-12 -12)"><path d="M3 4h18" stroke="#1d7fc4" stroke-width="1.5" fill="none" stroke-linejoin="round" stroke-linecap="round" /><rect x="4.5" y="6.5" width="14" height="9" rx="0" stroke="#d4d5d6" stroke-width="1.5" fill="none"/><path d="M11.500 16v4M8 20.500h7" stroke="#d4d5d6" stroke-width="1.5" fill="none" stroke-linejoin="round" stroke-linecap="round" /><circle cx="17.5" cy="17" r="4.3" stroke="#27ae60" stroke-width="1.4" fill="#202326"/><path d="M16.200 14.800v4.400l3.500-2.200z" stroke="#27ae60" stroke-width="0" fill="#27ae60" stroke-linejoin="round" stroke-linecap="round" /></g></svg><svg style="position:absolute;left:774px;top:80px;" width="24" height="24" viewBox="0 0 24 24"><g transform="translate(12 12) scale(1.1) translate(-12 -12)"><path d="M3 4h18" stroke="#1d7fc4" stroke-width="1.5" fill="none" stroke-linejoin="round" stroke-linecap="round" /><rect x="4.5" y="6.5" width="14" height="9" rx="0" stroke="#d4d5d6" stroke-width="1.5" fill="none"/><path d="M11.500 16v4M8 20.500h7" stroke="#d4d5d6" stroke-width="1.5" fill="none" stroke-linejoin="round" stroke-linecap="round" /><circle cx="17.5" cy="17" r="4.3" stroke="#27ae60" stroke-width="1.4" fill="#202326"/><rect x="15.8" y="15.3" width="3.4" height="3.4" rx="0" stroke="#27ae60" stroke-width="0" fill="#27ae60"/></g></svg><div style="position:absolute;left:806px;top:82px;width:1px;height:20px;background:#6a6d70;"></div><svg style="position:absolute;left:814px;top:80px;" width="24" height="24" viewBox="0 0 24 24"><g transform="translate(12 12) scale(1.12) translate(-12 -12)"><rect x="3.5" y="4.5" width="17" height="16" rx="0" stroke="#d4d5d6" stroke-width="1.5" fill="none"/><path d="M3.500 8.500h17M3.500 12.500h17M3.500 16.500h17M9 8.500v12M15 8.500v12" stroke="#d4d5d6" stroke-width="1.3" fill="none" stroke-linejoin="round" stroke-linecap="round" /><path d="M3 4h18" stroke="#3daee9" stroke-width="2" fill="none" stroke-linejoin="round" stroke-linecap="round" /></g></svg><svg style="position:absolute;left:846px;top:91px;" width="8" height="5" viewBox="0 0 8 5"><path d="M0 0h8L4 4.500z" fill="#e8e8e8"/></svg><svg style="position:absolute;left:862px;top:80px;" width="24" height="24" viewBox="0 0 24 24"><g transform="translate(12 12) scale(1.12) translate(-12 -12)"><rect x="3.5" y="3.5" width="17" height="17" rx="0" stroke="#d4d5d6" stroke-width="1.5" fill="none"/><path d="M4.500 19.500l5.500-7 4 4.500 2.500-2.500 3 3.500v1.500z" stroke="#1d7fc4" stroke-width="0" fill="#1d7fc4" stroke-linejoin="round" stroke-linecap="round" /><circle cx="8" cy="8" r="1.6" stroke="#f5a33b" stroke-width="0" fill="#f5a33b"/></g></svg><svg style="position:absolute;left:896px;top:80px;" width="24" height="24" viewBox="0 0 24 24"><g transform="translate(12 12) scale(1.12) translate(-12 -12)"><rect x="2.5" y="4.5" width="19" height="15" rx="1" stroke="#d4d5d6" stroke-width="1.6" fill="none"/><path d="M2.500 8h19M2.500 16h19" stroke="#d4d5d6" stroke-width="1.3" fill="none" stroke-linejoin="round" stroke-linecap="round" /><rect x="4.5" y="5.600" width="1.500" height="1.500" fill="#d4d5d6"/><rect x="4.5" y="17" width="1.500" height="1.500" fill="#d4d5d6"/><rect x="7.5" y="5.600" width="1.500" height="1.500" fill="#d4d5d6"/><rect x="7.5" y="17" width="1.500" height="1.500" fill="#d4d5d6"/><rect x="10.5" y="5.600" width="1.500" height="1.500" fill="#d4d5d6"/><rect x="10.5" y="17" width="1.500" height="1.500" fill="#d4d5d6"/><rect x="13.5" y="5.600" width="1.500" height="1.500" fill="#d4d5d6"/><rect x="13.5" y="17" width="1.500" height="1.500" fill="#d4d5d6"/><rect x="16.5" y="5.600" width="1.500" height="1.500" fill="#d4d5d6"/><rect x="16.5" y="17" width="1.500" height="1.500" fill="#d4d5d6"/><rect x="19" y="5.600" width="1.500" height="1.500" fill="#d4d5d6"/><rect x="19" y="17" width="1.500" height="1.500" fill="#d4d5d6"/></g></svg><svg style="position:absolute;left:929px;top:80px;" width="24" height="24" viewBox="0 0 24 24"><g transform="translate(12 12) scale(1.12) translate(-12 -12)"><rect x="4" y="8" width="4" height="13" rx="1" stroke="#3daee9" stroke-width="1.2" fill="#2f93d4"/><rect x="10" y="3" width="4" height="18" rx="1" stroke="#f5a33b" stroke-width="1.2" fill="#f5a33b"/><rect x="16" y="11" width="4" height="10" rx="1" stroke="#d4d5d6" stroke-width="1.2" fill="#8e9092"/></g></svg><div style="position:absolute;left:962px;top:82px;width:1px;height:20px;background:#6a6d70;"></div><svg style="position:absolute;left:972px;top:80px;" width="24" height="24" viewBox="0 0 24 24"><g transform="translate(12 12) scale(1.12) translate(-12 -12)"><rect x="2.5" y="4.5" width="19" height="15" rx="0" stroke="#d4d5d6" stroke-width="1.6" fill="none"/><text x="8" y="14.5" font-family="Liberation Sans, sans-serif" font-size="11" font-weight="400" fill="#3daee9" text-anchor="middle">A</text><path d="M13 8.500h6M13 11.500h6M13 14.500h6M5 17h14" stroke="#d4d5d6" stroke-width="1.2" fill="none" stroke-linejoin="round" stroke-linecap="round" /></g></svg><svg style="position:absolute;left:1004px;top:80px;" width="24" height="24" viewBox="0 0 24 24"><path d="M4 20h5.500v-2.500C6.500 16 5 13.500 5 10.500 5 6.500 8 4 12 4s7 2.500 7 6.500c0 3-1.500 5.500-4.500 7V20H20" stroke="#d4d5d6" stroke-width="1.7" fill="none" stroke-linejoin="round" stroke-linecap="round" /></svg><svg style="position:absolute;left:1036px;top:91px;" width="8" height="5" viewBox="0 0 8 5"><path d="M0 0h8L4 4.500z" fill="#6f7275"/></svg><svg style="position:absolute;left:1050px;top:80px;" width="24" height="24" viewBox="0 0 24 24"><path d="M8 3.500h10v3.500h-6.500v3.500H16.500v3.500h-5v7H8z" stroke="#5d9fd6" stroke-width="1.5" fill="none" stroke-linejoin="round" stroke-linecap="round" /></svg><svg style="position:absolute;left:1084px;top:80px;" width="24" height="24" viewBox="0 0 24 24"><circle cx="11" cy="10" r="7" stroke="#d4d5d6" stroke-width="1.4" fill="none"/><path d="M4 10h14M11 3c-3 2-3 12 0 14M11 3c3 2 3 12 0 14" stroke="#d4d5d6" stroke-width="1.2" fill="none" stroke-linejoin="round" stroke-linecap="round" /><rect x="8" y="16" width="7" height="4.5" rx="2.2" stroke="#3daee9" stroke-width="1.7" fill="#202326"/><rect x="14.5" y="16" width="7" height="4.5" rx="2.2" stroke="#3daee9" stroke-width="1.7" fill="none"/><path d="M12 18.200h6" stroke="#3daee9" stroke-width="1.6" fill="none" stroke-linejoin="round" stroke-linecap="round" /></svg><div style="position:absolute;left:1115px;top:75px;width:32px;height:34px;background:#3a3d41;border:1px solid #54575a;border-radius:4px;"></div><svg style="position:absolute;left:1119px;top:80px;" width="24" height="24" viewBox="0 0 24 24"><rect x="3.5" y="8.5" width="10" height="10" rx="0" stroke="#d4d5d6" stroke-width="1.5" fill="none"/><circle cx="14.5" cy="8.5" r="5.5" stroke="#d4d5d6" stroke-width="1.5" fill="none"/><path d="M14 11l5.500 5.500L14 22l-5.500-5.500z" stroke="#d4d5d6" stroke-width="1.5" fill="#3a3d41" stroke-linejoin="round" stroke-linecap="round" /></svg><svg style="position:absolute;left:1158px;top:80px;" width="24" height="24" viewBox="0 0 24 24"><g transform="translate(12 12) scale(1.08) translate(-12 -12)"><rect x="5.5" y="7.5" width="15" height="12" rx="0" stroke="#d4d5d6" stroke-width="1.5" fill="#2f3236"/><rect x="8" y="10" width="10" height="2.5" rx="0" stroke="#d4d5d6" stroke-width="0" fill="#9a9b9c"/><path d="M5 1.500v7M1.500 5h7M2.500 2.500l5 5M7.500 2.500l-5 5" stroke="#f5a33b" stroke-width="1.3" fill="none" stroke-linejoin="round" stroke-linecap="round" /></g></svg><svg style="position:absolute;left:1190px;top:91px;" width="8" height="5" viewBox="0 0 8 5"><path d="M0 0h8L4 4.500z" fill="#e8e8e8"/></svg><svg style="position:absolute;left:1207px;top:80px;" width="24" height="24" viewBox="0 0 24 24"><g transform="translate(12 12) scale(1.1) translate(-12 -12)"><rect x="2.5" y="3.5" width="14" height="11" rx="0" stroke="#d4d5d6" stroke-width="1.5" fill="#2f3236"/><rect x="5" y="6" width="9" height="2" rx="0" stroke="#d4d5d6" stroke-width="0" fill="#9a9b9c"/><rect x="7.5" y="9.5" width="14" height="11" rx="0" stroke="#d4d5d6" stroke-width="1.5" fill="#2f3236"/><rect x="10" y="12" width="9" height="2.5" rx="0" stroke="#d4d5d6" stroke-width="0" fill="#9a9b9c"/></g></svg><svg style="position:absolute;left:1240px;top:80px;" width="24" height="24" viewBox="0 0 24 24"><g transform="translate(12 12) scale(1.1) translate(-12 -12)"><rect x="2.5" y="4.5" width="16" height="13" rx="0" stroke="#d4d5d6" stroke-width="1.5" fill="#2f3236"/><rect x="5" y="7" width="11" height="2.5" rx="0" stroke="#d4d5d6" stroke-width="0" fill="#9a9b9c"/><path d="M14 14l7 7M21 14l-7 7" stroke="#e8453c" stroke-width="1.6" fill="none" stroke-linejoin="round" stroke-linecap="round" /></g></svg><div style="position:absolute;left:1273px;top:82px;width:1px;height:20px;background:#6a6d70;"></div><svg style="position:absolute;left:1281px;top:80px;" width="24" height="24" viewBox="0 0 24 24"><g transform="translate(12 12) scale(1.1) translate(-12 -12)"><rect x="2.5" y="4.5" width="16" height="13" rx="0" stroke="#d4d5d6" stroke-width="1.5" fill="#2f3236"/><rect x="5" y="7" width="11" height="2.5" rx="0" stroke="#d4d5d6" stroke-width="0" fill="#9a9b9c"/><path d="M12.500 22l9-9v9z" stroke="#f5a33b" stroke-width="1.6" fill="#202326" stroke-linejoin="round" stroke-linecap="round" /><path d="M16.500 20.500l3-3v3z" stroke="#f5a33b" stroke-width="1" fill="none" stroke-linejoin="round" stroke-linecap="round" /></g></svg><svg style="position:absolute;left:1312px;top:91px;" width="8" height="5" viewBox="0 0 8 5"><path d="M0 0h8L4 4.500z" fill="#e8e8e8"/></svg><div style="position:absolute;left:18px;top:114px;width:32px;height:34px;background:#3a3d41;border:1px solid #54575a;border-radius:4px;"></div><svg style="position:absolute;left:22px;top:119px;" width="24" height="24" viewBox="0 0 24 24"><path d="M7 3v16l4.200-4 2.800 6 2.500-1.200-2.800-5.800H19.500z" stroke="#e8e8e8" stroke-width="1.6" fill="none" stroke-linejoin="round" stroke-linecap="round" /></svg><svg style="position:absolute;left:56px;top:119px;" width="24" height="24" viewBox="0 0 24 24"><circle cx="10" cy="9.5" r="6.5" stroke="#d4d5d6" stroke-width="1.7" fill="none"/><path d="M15 14.500l6 6" stroke="#d4d5d6" stroke-width="2" fill="none" stroke-linejoin="round" stroke-linecap="round" /><path d="M7 9.500h3M8.500 8v3M11 11.500h2.500" stroke="#3daee9" stroke-width="1.3" fill="none" stroke-linejoin="round" stroke-linecap="round" /></svg><div style="position:absolute;left:89px;top:121px;width:1px;height:20px;background:#6a6d70;"></div><svg style="position:absolute;left:188px;top:130px;" width="8" height="5" viewBox="0 0 8 5"><path d="M0 0h8L4 4.500z" fill="#e8e8e8"/></svg><svg style="position:absolute;left:203px;top:119px;" width="24" height="24" viewBox="0 0 24 24"><path d="M16 3c2 0 4 2 3.500 3.500L12 13l-2.500-2.500zM9 11c-2 .5-3 2-3 4l-1.500 1c2 .5 5 .5 6.500-1 .8-.8 1-2 .5-2.500" stroke="#d4d5d6" stroke-width="1.4" fill="none" stroke-linejoin="round" stroke-linecap="round" /><rect x="2" y="17" width="4" height="1.500" fill="#e8e8e8"/></svg><svg style="position:absolute;left:233px;top:130px;" width="8" height="5" viewBox="0 0 8 5"><path d="M0 0h8L4 4.500z" fill="#e8e8e8"/></svg><svg style="position:absolute;left:248px;top:119px;" width="24" height="24" viewBox="0 0 24 24"><path d="M7 8l7-4.500 5 9-8 4.500z" stroke="#d4d5d6" stroke-width="1.5" fill="none" stroke-linejoin="round" stroke-linecap="round" /><path d="M12 3c1-1.500 3.500-1 3.500 1.500V8" stroke="#d4d5d6" stroke-width="1.4" fill="none" stroke-linejoin="round" stroke-linecap="round" /><path d="M5 8.500c-1.500 2-1.500 4.500 0 5.500 1-1 1.500-3.500 2-6z" stroke="#3daee9" stroke-width="0" fill="#3daee9" stroke-linejoin="round" stroke-linecap="round" /></svg><svg style="position:absolute;left:278px;top:130px;" width="8" height="5" viewBox="0 0 8 5"><path d="M0 0h8L4 4.500z" fill="#e8e8e8"/></svg><div style="position:absolute;left:292px;top:121px;width:1px;height:20px;background:#6a6d70;"></div><svg style="position:absolute;left:302px;top:119px;" width="24" height="24" viewBox="0 0 24 24"><path d="M4 4l16 16" stroke="#1d7fc4" stroke-width="1.6" fill="none" stroke-linejoin="round" stroke-linecap="round" /></svg><svg style="position:absolute;left:336px;top:119px;" width="24" height="24" viewBox="0 0 24 24"><g transform="translate(12 12) scale(1.1) translate(-12 -12)"><rect x="3.5" y="5.5" width="17" height="13" rx="0" stroke="#d4d5d6" stroke-width="1.6" fill="none"/></g></svg><svg style="position:absolute;left:370px;top:119px;" width="24" height="24" viewBox="0 0 24 24"><ellipse cx="12" cy="12" rx="8.500" ry="6.500" stroke="#d4d5d6" stroke-width="1.600" fill="none"/></svg><div style="position:absolute;left:402px;top:121px;width:1px;height:20px;background:#6a6d70;"></div><svg style="position:absolute;left:412px;top:119px;" width="24" height="24" viewBox="0 0 24 24"><path d="M3 12h14" stroke="#1d7fc4" stroke-width="1.6" fill="none" stroke-linejoin="round" stroke-linecap="round" /><path d="M16 9l5 3-5 3z" stroke="#1d7fc4" stroke-width="0" fill="#1d7fc4" stroke-linejoin="round" stroke-linecap="round" /></svg><svg style="position:absolute;left:441px;top:130px;" width="8" height="5" viewBox="0 0 8 5"><path d="M0 0h8L4 4.500z" fill="#e8e8e8"/></svg><svg style="position:absolute;left:456px;top:119px;" width="24" height="24" viewBox="0 0 24 24"><path d="M15 3.500l4 2.500-8 12-4.500 2 .5-4.500z" stroke="#d4d5d6" stroke-width="1.5" fill="none" stroke-linejoin="round" stroke-linecap="round" /><path d="M5 6c-2 5-1 13 6 15s9-3 8-7" stroke="#1d7fc4" stroke-width="1.4" fill="none" stroke-linejoin="round" stroke-linecap="round" /></svg><svg style="position:absolute;left:486px;top:130px;" width="8" height="5" viewBox="0 0 8 5"><path d="M0 0h8L4 4.500z" fill="#e8e8e8"/></svg><svg style="position:absolute;left:500px;top:119px;" width="24" height="24" viewBox="0 0 24 24"><path d="M5.500 5h4.500v14h7.500" stroke="#1d7fc4" stroke-width="1.7" fill="none" stroke-linejoin="round" stroke-linecap="round" /><circle cx="5" cy="5" r="1.7" stroke="#1d7fc4" stroke-width="0" fill="#1d7fc4"/><circle cx="18.5" cy="19" r="1.7" stroke="#1d7fc4" stroke-width="0" fill="#1d7fc4"/></svg><svg style="position:absolute;left:531px;top:130px;" width="8" height="5" viewBox="0 0 8 5"><path d="M0 0h8L4 4.500z" fill="#e8e8e8"/></svg><div style="position:absolute;left:545px;top:121px;width:1px;height:20px;background:#6a6d70;"></div><svg style="position:absolute;left:553px;top:119px;" width="24" height="24" viewBox="0 0 24 24"><path d="M12 2.500l9.500 9.500-9.500 9.500L2.500 12z" stroke="#d4d5d6" stroke-width="1.6" fill="none" stroke-linejoin="round" stroke-linecap="round" /></svg><svg style="position:absolute;left:584px;top:130px;" width="8" height="5" viewBox="0 0 8 5"><path d="M0 0h8L4 4.500z" fill="#e8e8e8"/></svg><svg style="position:absolute;left:598px;top:119px;" width="24" height="24" viewBox="0 0 24 24"><circle cx="12" cy="12" r="9" stroke="#d4d5d6" stroke-width="1.6" fill="none"/><circle cx="9" cy="9.5" r="1.1" stroke="#d4d5d6" stroke-width="0" fill="#d4d5d6"/><circle cx="15" cy="9.5" r="1.1" stroke="#d4d5d6" stroke-width="0" fill="#d4d5d6"/><path d="M7.500 14c1.500 3.500 7.500 3.500 9 0" stroke="#d4d5d6" stroke-width="1.5" fill="none" stroke-linejoin="round" stroke-linecap="round" /></svg><svg style="position:absolute;left:629px;top:130px;" width="8" height="5" viewBox="0 0 8 5"><path d="M0 0h8L4 4.500z" fill="#e8e8e8"/></svg><svg style="position:absolute;left:643px;top:119px;" width="24" height="24" viewBox="0 0 24 24"><path d="M2 12l6-5v3h8V7l6 5-6 5v-3H8v3z" stroke="#d4d5d6" stroke-width="1.5" fill="none" stroke-linejoin="round" stroke-linecap="round" /></svg><svg style="position:absolute;left:674px;top:130px;" width="8" height="5" viewBox="0 0 8 5"><path d="M0 0h8L4 4.500z" fill="#e8e8e8"/></svg><svg style="position:absolute;left:688px;top:119px;" width="24" height="24" viewBox="0 0 24 24"><g transform="translate(12 12) scale(1.08) translate(-12 -12)"><rect x="3" y="3" width="6" height="6" rx="0" stroke="#d4d5d6" stroke-width="1.5" fill="none"/><rect x="11" y="3" width="10" height="6" rx="0" stroke="#d4d5d6" stroke-width="1.5" fill="none"/><rect x="3" y="12" width="6" height="9" rx="0" stroke="#d4d5d6" stroke-width="1.5" fill="none"/><rect x="11" y="12" width="10" height="9" rx="0" stroke="#d4d5d6" stroke-width="1.5" fill="none"/></g></svg><svg style="position:absolute;left:719px;top:130px;" width="8" height="5" viewBox="0 0 8 5"><path d="M0 0h8L4 4.500z" fill="#e8e8e8"/></svg><svg style="position:absolute;left:732px;top:119px;" width="24" height="24" viewBox="0 0 24 24"><path d="M4 3.500h16a1.500 1.500 0 011.500 1.500v9a1.500 1.500 0 01-1.500 1.500h-9l-4 5v-5H4a1.500 1.500 0 01-1.500-1.500V5A1.500 1.500 0 014 3.500z" stroke="#d4d5d6" stroke-width="1.5" fill="none" stroke-linejoin="round" stroke-linecap="round" /></svg><svg style="position:absolute;left:764px;top:130px;" width="8" height="5" viewBox="0 0 8 5"><path d="M0 0h8L4 4.500z" fill="#e8e8e8"/></svg><svg style="position:absolute;left:778px;top:119px;" width="24" height="24" viewBox="0 0 24 24"><path d="M12 2.500l2.700 6.500 7 .6-5.300 4.600 1.600 6.800-6-3.600-6 3.600 1.600-6.800L2.300 9.600l7-.6z" stroke="#d4d5d6" stroke-width="1.5" fill="none" stroke-linejoin="round" stroke-linecap="round" /></svg><svg style="position:absolute;left:808px;top:130px;" width="8" height="5" viewBox="0 0 8 5"><path d="M0 0h8L4 4.500z" fill="#e8e8e8"/></svg><svg style="position:absolute;left:822px;top:119px;" width="24" height="24" viewBox="0 0 24 24"><g transform="translate(12 12) scale(1.12) translate(-12 -12)"><path d="M3.500 8l4-4.500h13V17l-4 4.500h-13z" stroke="#6db1e6" stroke-width="1.2" fill="#7cbcee" stroke-linejoin="round" stroke-linecap="round" /><path d="M3.500 8h13v13.500M16.500 8l4-4.500" stroke="#4d93c8" stroke-width="1.2" fill="none" stroke-linejoin="round" stroke-linecap="round" /></g></svg><svg style="position:absolute;left:854px;top:130px;" width="8" height="5" viewBox="0 0 8 5"><path d="M0 0h8L4 4.500z" fill="#e8e8e8"/></svg><div style="position:absolute;left:867px;top:121px;width:1px;height:20px;background:#6a6d70;"></div><svg style="position:absolute;left:878px;top:119px;" width="24" height="24" viewBox="0 0 24 24"><g transform="translate(12 12) scale(1.08) translate(-12 -12)"><rect x="4" y="4" width="16" height="16" rx="0" stroke="#d4d5d6" stroke-width="1.4" fill="none"/><rect x="2.5" y="2.5" width="3" height="3" fill="#1d7fc4"/><rect x="18.5" y="2.5" width="3" height="3" fill="#1d7fc4"/><rect x="2.5" y="18.5" width="3" height="3" fill="#1d7fc4"/><path d="M21.500 17a4.500 4.500 0 11-4.500-4.500M14.500 10.500l2.500 2-2.500 2" stroke="#1d7fc4" stroke-width="1.4" fill="none" stroke-linejoin="round" stroke-linecap="round" /></g></svg><svg style="position:absolute;left:910px;top:119px;" width="24" height="24" viewBox="0 0 24 24"><path d="M4.500 2.500v19" stroke="#d4d5d6" stroke-width="1.5" fill="none" stroke-linejoin="round" stroke-linecap="round" /><rect x="4.5" y="9" width="14" height="4.5" rx="0" stroke="#d4d5d6" stroke-width="1.5" fill="none"/><rect x="4.5" y="16" width="9" height="4.5" rx="0" stroke="#d4d5d6" stroke-width="1.5" fill="none"/><path d="M9 5.500h10M9 5.500l2.500-2M9 5.500l2.500 2" stroke="#d4d5d6" stroke-width="1.3" fill="none" stroke-linejoin="round" stroke-linecap="round" /></svg><svg style="position:absolute;left:940px;top:130px;" width="8" height="5" viewBox="0 0 8 5"><path d="M0 0h8L4 4.500z" fill="#6f7275"/></svg><svg style="position:absolute;left:956px;top:119px;" width="24" height="24" viewBox="0 0 24 24"><rect x="9.5" y="3" width="11.5" height="11.5" rx="1.5" stroke="#d4d5d6" stroke-width="1.5" fill="#2f3236"/><rect x="3" y="8" width="12.5" height="12.5" rx="1.5" stroke="#d4d5d6" stroke-width="1.5" fill="#d4d5d6"/></svg><svg style="position:absolute;left:986px;top:130px;" width="8" height="5" viewBox="0 0 8 5"><path d="M0 0h8L4 4.500z" fill="#6f7275"/></svg><svg style="position:absolute;left:1000px;top:119px;" width="24" height="24" viewBox="0 0 24 24"><path d="M5 6v14h5V6zM14 6v14h5V6z" stroke="#d4d5d6" stroke-width="1.5" fill="none" stroke-linejoin="round" stroke-linecap="round" /><path d="M3 3.500h8M3 3.500l2-1.500M3 3.500l2 1.500M21 3.500h-8" stroke="#d4d5d6" stroke-width="1.1" fill="none" stroke-linejoin="round" stroke-linecap="round" /><path d="M12 2v20" stroke="#d4d5d6" stroke-width="1" fill="none" stroke-linejoin="round" stroke-linecap="round" /></svg><svg style="position:absolute;left:1031px;top:130px;" width="8" height="5" viewBox="0 0 8 5"><path d="M0 0h8L4 4.500z" fill="#6f7275"/></svg><div style="position:absolute;left:1045px;top:121px;width:1px;height:20px;background:#6a6d70;"></div><svg style="position:absolute;left:1054px;top:119px;" width="24" height="24" viewBox="0 0 24 24"><g transform="translate(12 12) scale(1.1) translate(-12 -12)"><rect x="6" y="8" width="15" height="11" rx="0" stroke="#d4d5d6" stroke-width="0" fill="#8e9092"/><rect x="3.5" y="5" width="15" height="11" rx="0" stroke="#d4d5d6" stroke-width="1.5" fill="#202326"/></g></svg><svg style="position:absolute;left:1089px;top:119px;" width="24" height="24" viewBox="0 0 24 24"><g transform="translate(12 12) scale(1.1) translate(-12 -12)"><rect x="3.5" y="3.5" width="13" height="13" rx="0" stroke="#d4d5d6" stroke-width="1.5" fill="none"/><path d="M4.500 15l4.500-5 3 3 4-3.500V16H4.500z" stroke="#d4d5d6" stroke-width="0" fill="#8e9092" stroke-linejoin="round" stroke-linecap="round" /><path d="M19 6v13H6" stroke="#d4d5d6" stroke-width="1.3" fill="none" stroke-linejoin="round" stroke-linecap="round" stroke-dasharray="2 1.500"/><rect x="15.5" y="15.5" width="5.5" height="5.5" rx="0" stroke="#d4d5d6" stroke-width="1.3" fill="#202326"/></g></svg><svg style="position:absolute;left:1120px;top:119px;" width="24" height="24" viewBox="0 0 24 24"><path d="M4 19l11-11 2.500 2.500-11 11z" stroke="#d4d5d6" stroke-width="1.5" fill="#d4d5d6" stroke-linejoin="round" stroke-linecap="round" /><path d="M14 4l1.200 2.500M19 5l-1.500 2M20.500 10l-2.500-.5M5 4l4 2-3 3.500" stroke="#d4d5d6" stroke-width="1.4" fill="none" stroke-linejoin="round" stroke-linecap="round" /></svg><svg style="position:absolute;left:1151px;top:130px;" width="8" height="5" viewBox="0 0 8 5"><path d="M0 0h8L4 4.500z" fill="#6f7275"/></svg><div style="position:absolute;left:1165px;top:121px;width:1px;height:20px;background:#6a6d70;"></div><svg style="position:absolute;left:1174px;top:119px;" width="24" height="24" viewBox="0 0 24 24"><path d="M3.500 20.500L18 3.500" stroke="#d4d5d6" stroke-width="1.4" fill="none" stroke-linejoin="round" stroke-linecap="round" /><rect x="2" y="19" width="3" height="3" rx="0" stroke="#e8e8e8" stroke-width="0" fill="#e8e8e8"/><rect x="17" y="2" width="3" height="3" rx="0" stroke="#e8e8e8" stroke-width="0" fill="#e8e8e8"/><rect x="9.5" y="10" width="3.4" height="3.4" rx="0" stroke="#3daee9" stroke-width="1.2" fill="none"/><path d="M13 13l7.500 5-7 3.500z" stroke="#d4d5d6" stroke-width="1.4" fill="none" stroke-linejoin="round" stroke-linecap="round" /></svg><svg style="position:absolute;left:1208px;top:119px;" width="24" height="24" viewBox="0 0 24 24"><path d="M14 3l7 7-9 8-5-5z" stroke="#f5a33b" stroke-width="1.2" fill="#f5a33b" stroke-linejoin="round" stroke-linecap="round" /><path d="M7 13l5 5-6.500 3.500L3.500 20z" stroke="#c77d1f" stroke-width="1.2" fill="#e5932e" stroke-linejoin="round" stroke-linecap="round" /><path d="M3.500 20.500l2-2" stroke="#333" stroke-width="1" fill="none" stroke-linejoin="round" stroke-linecap="round" /></svg><svg style="position:absolute;left:1242px;top:119px;" width="24" height="24" viewBox="0 0 24 24"><path d="M3 6l3-3h8v7l-3 3H3z" stroke="#d4d5d6" stroke-width="1.4" fill="none" stroke-linejoin="round" stroke-linecap="round" /><path d="M3 6h8v7M11 6l3-3" stroke="#d4d5d6" stroke-width="1.2" fill="none" stroke-linejoin="round" stroke-linecap="round" /><path d="M6 21L21 4" stroke="#d4d5d6" stroke-width="1.5" fill="none" stroke-linejoin="round" stroke-linecap="round" /><rect x="16" y="16" width="5.5" height="5.5" rx="0" stroke="#d4d5d6" stroke-width="1.4" fill="none"/></svg><div style="position:absolute;left:96px;top:122px;width:86px;height:17px;background:#141618;"></div><div style="position:absolute;left:97px;top:130px;width:84px;height:1.5px;background:#c4c4c4;"></div><div style="position:absolute;left:202px;top:139px;width:25px;height:5px;background:#3465a4;"></div><div style="position:absolute;left:247px;top:139px;width:25px;height:5px;background:#729fcf;"></div><span style="position:absolute;left:17px;top:159px;font:700 13.5px/19px 'Liberation Sans',sans-serif;color:#fcfcfc;white-space:pre;letter-spacing:-0.556px;">Slides</span><svg style="position:absolute;left:180px;top:163px;" width="10" height="10" viewBox="0 0 10 10"><path d="M1 1l8 8M9 1l-8 8" stroke="#fcfcfc" stroke-width="1.300"/></svg><div style="position:absolute;left:16px;top:184px;width:176px;height:516px;border:1px solid #5c5f62;border-bottom:none;background:#202326;"></div><div style="position:absolute;left:170px;top:185px;width:1px;height:515px;background:#4a4d50;"></div><div style="position:absolute;left:0px;top:185px;width:200px;height:514px;overflow:hidden;"><div style="position:absolute;left:0px;top:-185px;width:200px;height:900px;"><span style="position:absolute;left:-554px;width:600px;text-align:right;top:202px;font:700 13px/19px 'Liberation Sans',sans-serif;color:#8a8d90;white-space:pre;">17</span><div style="position:absolute;left:51px;top:205px;width:106px;height:60px;background:#fff;overflow:hidden;"><div style="position:absolute;left:0px;top:51px;width:106px;height:9px;background:linear-gradient(90deg,#3c6eb4,#4a80c4);"></div><div style="position:absolute;left:6px;top:56px;width:1.5px;height:1.5px;background:#dfe8f5;"></div></div><span style="position:absolute;left:-396px;width:1000px;text-align:center;top:210px;font:400 5.8px/10px 'Liberation Sans',sans-serif;color:#51a2da;white-space:pre;">The cat came back</span><span style="position:absolute;left:-396px;width:1000px;text-align:center;top:218px;font:400 2.4px/7px 'Liberation Sans',sans-serif;color:#999;white-space:pre;">The look on their faces was something else</span><div style="position:absolute;left:68px;top:228px;width:24px;height:24px;background:#f3eab0;border:2.500px solid #e59728;border-radius:50% 50% 50% 20%;"></div><div style="position:absolute;left:74px;top:238px;width:12px;height:6px;background:#e59728;border-radius:2px;transform:rotate(-25deg);"></div><div style="position:absolute;left:112px;top:227px;width:27px;height:27px;background:#f6dcb4;border:3px solid #e59728;border-radius:50% 50% 50% 20%;"></div><div style="position:absolute;left:121px;top:229px;width:9px;height:8px;background:#6b4a35;border-radius:2px 2px 4px 4px;"></div><div style="position:absolute;left:120px;top:240px;width:11px;height:9px;background:#d9a24c;border:1px solid #b97a1e;"></div><div style="position:absolute;left:102px;top:219px;width:0.5px;height:32px;background:#efefef;"></div><div style="position:absolute;left:139px;top:258px;width:5px;height:5px;background:#fff;border-radius:50% 50% 50% 10%;"></div><span style="position:absolute;left:145px;top:258px;font:700 3.4px/8px 'Liberation Sans',sans-serif;color:#fff;white-space:pre;">fedora</span><span style="position:absolute;left:-554px;width:600px;text-align:right;top:282px;font:700 13px/19px 'Liberation Sans',sans-serif;color:#8a8d90;white-space:pre;">18</span><div style="position:absolute;left:51px;top:285px;width:106px;height:60px;background:#fff;overflow:hidden;"><div style="position:absolute;left:0px;top:51px;width:106px;height:9px;background:linear-gradient(90deg,#3c6eb4,#4a80c4);"></div><div style="position:absolute;left:6px;top:56px;width:1.5px;height:1.5px;background:#dfe8f5;"></div></div><span style="position:absolute;left:59px;top:289px;font:400 5.4px/10px 'Liberation Sans',sans-serif;color:#51a2da;white-space:pre;">Incentives for a redesign</span><span style="position:absolute;left:59px;top:298px;font:700 2.6px/7px 'Liberation Sans',sans-serif;color:#4a5a8a;white-space:pre;">Strong network</span><div style="position:absolute;left:59px;top:305px;width:27px;height:10px;background:repeating-linear-gradient(#d5d8de 0 1px,#fff 1px 2.500px);"></div><span style="position:absolute;left:91px;top:298px;font:700 2.6px/7px 'Liberation Sans',sans-serif;color:#4a5a8a;white-space:pre;">Improvements possible</span><div style="position:absolute;left:91px;top:305px;width:27px;height:12px;background:repeating-linear-gradient(#d5d8de 0 1px,#fff 1px 2.500px);"></div><span style="position:absolute;left:123px;top:298px;font:700 2.6px/7px 'Liberation Sans',sans-serif;color:#4a5a8a;white-space:pre;">Consistency needed</span><div style="position:absolute;left:123px;top:305px;width:27px;height:10px;background:repeating-linear-gradient(#d5d8de 0 1px,#fff 1px 2.500px);"></div><div style="position:absolute;left:139px;top:338px;width:5px;height:5px;background:#fff;border-radius:50% 50% 50% 10%;"></div><span style="position:absolute;left:145px;top:338px;font:700 3.4px/8px 'Liberation Sans',sans-serif;color:#fff;white-space:pre;">fedora</span><span style="position:absolute;left:-554px;width:600px;text-align:right;top:362px;font:700 13px/19px 'Liberation Sans',sans-serif;color:#8a8d90;white-space:pre;">19</span><div style="position:absolute;left:51px;top:365px;width:106px;height:60px;background:#fff;overflow:hidden;"><div style="position:absolute;left:91px;top:0px;width:15px;height:60px;background:linear-gradient(#3c6eb4,#4d86c6);"></div><div style="position:absolute;left:95px;top:5px;width:7px;height:7px;background:#fff;border-radius:50% 50% 50% 10%;"></div></div><span style="position:absolute;left:59px;top:369px;font:400 5.2px/10px 'Liberation Sans',sans-serif;color:#51a2da;white-space:pre;">Some additional considerations</span><div style="position:absolute;left:62px;top:382px;width:1.5px;height:1.5px;background:#e59728;"></div><div style="position:absolute;left:65px;top:381px;width:66px;height:5px;background:repeating-linear-gradient(#c9ccd3 0 1px,#fff 1px 2.500px);"></div><div style="position:absolute;left:62px;top:390px;width:1.5px;height:1.5px;background:#e59728;"></div><div style="position:absolute;left:65px;top:389.5px;width:54px;height:1.5px;background:#c9ccd3;"></div><span style="position:absolute;left:-554px;width:600px;text-align:right;top:442px;font:700 13px/19px 'Liberation Sans',sans-serif;color:#8a8d90;white-space:pre;">20</span><div style="position:absolute;left:51px;top:445px;width:106px;height:60px;background:#51a2da;overflow:hidden;"></div><span style="position:absolute;left:57px;top:459px;font:700 6.8px/11px 'Liberation Sans',sans-serif;color:#fff;white-space:pre;">This redesign</span><span style="position:absolute;left:57px;top:468px;font:700 6.8px/11px 'Liberation Sans',sans-serif;color:#fff;white-space:pre;">took SEVERAL</span><span style="position:absolute;left:57px;top:477px;font:700 6.8px/11px 'Liberation Sans',sans-serif;color:#fff;white-space:pre;">iterations!</span><div style="position:absolute;left:145px;top:495px;width:6px;height:6px;background:#fff;border-radius:50% 50% 50% 10%;"></div><div style="position:absolute;left:25px;top:520px;width:137px;height:70px;background:linear-gradient(#6ea6cc,#a9cee3);border:1px solid #b7d6e8;"></div><span style="position:absolute;left:-554px;width:600px;text-align:right;top:522px;font:700 13px/19px 'Liberation Sans',sans-serif;color:#3a3d41;white-space:pre;">21</span><div style="position:absolute;left:51px;top:525px;width:106px;height:60px;background:#fff;overflow:hidden;"><div style="position:absolute;left:91px;top:0px;width:15px;height:60px;background:linear-gradient(#3c6eb4,#4d86c6);"></div><div style="position:absolute;left:95px;top:5px;width:7px;height:7px;background:#fff;border-radius:50% 50% 50% 10%;"></div></div><span style="position:absolute;left:59px;top:529px;font:400 3.8px/8px 'Liberation Sans',sans-serif;color:#51a2da;white-space:pre;">One does not simply bring the cat back</span><span style="position:absolute;left:59px;top:535px;font:400 2.2px/6px 'Liberation Sans',sans-serif;color:#3d4f80;white-space:pre;">It takes consideration and planning.</span><div style="position:absolute;left:63px;top:541px;width:52px;height:3px;background:repeating-linear-gradient(#c4c8cf 0 1px,#fff 1px 2px);"></div><div style="position:absolute;left:63px;top:547px;width:52px;height:4px;background:repeating-linear-gradient(#c4c8cf 0 1px,#fff 1px 2px);"></div><div style="position:absolute;left:63px;top:555px;width:50px;height:4px;background:repeating-linear-gradient(#c4c8cf 0 1px,#fff 1px 2px);"></div><div style="position:absolute;left:83px;top:563px;width:19px;height:19px;background:#f6d9a8;border:1.500px solid #e59728;border-radius:50% 50% 50% 20%;"></div><div style="position:absolute;left:107px;top:565px;width:17px;height:17px;background:#f0ecae;border:1.500px solid #e59728;border-radius:50% 50% 50% 20%;"></div><div style="position:absolute;left:125px;top:559px;width:15px;height:15px;background:#5b3a86;border:1.500px solid #e59728;border-radius:50% 50% 50% 20%;"></div><div style="position:absolute;left:129px;top:545px;width:13px;height:13px;background:#6a4a9a;border:1.500px solid #e59728;border-radius:50% 50% 50% 20%;"></div><div style="position:absolute;left:128px;top:535px;width:9px;height:9px;background:#f0ecae;border:1.500px solid #e59728;border-radius:50% 50% 50% 20%;"></div><div style="position:absolute;left:89px;top:567px;width:6px;height:5px;background:#6b4a35;border-radius:2px;"></div><div style="position:absolute;left:88.5px;top:573px;width:7px;height:6px;background:#d9a24c;"></div><div style="position:absolute;left:112px;top:568px;width:6px;height:5px;background:#6b4a35;border-radius:2px;"></div><div style="position:absolute;left:112px;top:574px;width:6px;height:5px;background:#d9a24c;"></div><div style="position:absolute;left:129px;top:563px;width:6px;height:6px;background:#e0a040;"></div><div style="position:absolute;left:132.5px;top:549px;width:5px;height:5px;background:#e0a040;"></div><span style="position:absolute;left:-554px;width:600px;text-align:right;top:602px;font:700 13px/19px 'Liberation Sans',sans-serif;color:#8a8d90;white-space:pre;">22</span><div style="position:absolute;left:51px;top:605px;width:106px;height:60px;background:#e59728;overflow:hidden;"></div><span style="position:absolute;left:57px;top:624px;font:700 6.8px/11px 'Liberation Sans',sans-serif;color:#fff;white-space:pre;">Rapid fire</span><span style="position:absolute;left:57px;top:633px;font:700 6.8px/11px 'Liberation Sans',sans-serif;color:#fff;white-space:pre;">examples</span><div style="position:absolute;left:145px;top:655px;width:6px;height:6px;background:#fff;border-radius:50% 50% 50% 10%;"></div><span style="position:absolute;left:-554px;width:600px;text-align:right;top:682px;font:700 13px/19px 'Liberation Sans',sans-serif;color:#8a8d90;white-space:pre;">23</span><div style="position:absolute;left:51px;top:685px;width:106px;height:60px;background:#fff;overflow:hidden;"></div><span style="position:absolute;left:-396px;width:1000px;text-align:center;top:687px;font:400 4.2px/9px 'Liberation Sans',sans-serif;color:#51a2da;white-space:pre;">Bona Fide</span><span style="position:absolute;left:-396px;width:1000px;text-align:center;top:694px;font:400 2.2px/6px 'Liberation Sans',sans-serif;color:#999;white-space:pre;">The real, genuine examples</span></div></div><div style="position:absolute;left:177px;top:511px;width:8px;height:130px;background:#4a4e52;border-radius:4px;border:1px solid #5a5e62;"></div><div style="position:absolute;left:197px;top:152px;width:1px;height:550px;background:#5c5f62;"></div><div style="position:absolute;left:196px;top:389px;width:8px;height:74px;background:#fcfcfc;"></div><svg style="position:absolute;left:197px;top:421px;" width="6" height="9" viewBox="0 0 6 9"><path d="M5.500 0.500v8L0.500 4.500z" fill="#111"/></svg><div style="position:absolute;left:292px;top:156px;width:248px;height:31px;background:#1b1e20;"></div><div style="position:absolute;left:212px;top:155px;width:80px;height:33px;background:#202326;border:1px solid #5c5f62;border-bottom:none;border-top:3px solid #3daee9;border-radius:4px 4px 0 0;"></div><span style="position:absolute;left:-250.4px;width:1000px;text-align:center;top:160px;font:400 13.3px/19px 'Liberation Sans',sans-serif;color:#fcfcfc;white-space:pre;letter-spacing:0.428px;">Normal</span><span style="position:absolute;left:309px;top:161px;font:400 13.3px/19px 'Liberation Sans',sans-serif;color:#fcfcfc;white-space:pre;letter-spacing:0.310px;">Outline</span><span style="position:absolute;left:393px;top:161px;font:400 13.3px/19px 'Liberation Sans',sans-serif;color:#fcfcfc;white-space:pre;letter-spacing:0.312px;">Notes</span><span style="position:absolute;left:461px;top:161px;font:400 13.3px/19px 'Liberation Sans',sans-serif;color:#fcfcfc;white-space:pre;letter-spacing:-0.135px;">Slide Sorter</span><div style="position:absolute;left:205px;top:190px;width:769px;height:494px;background:#1b1e20;"></div><div style="position:absolute;left:974px;top:190px;width:1px;height:494px;background:#4a4d50;"></div><div style="position:absolute;left:995px;top:150px;width:1px;height:553px;background:#5c5f62;"></div><div style="position:absolute;left:216px;top:226px;width:744px;height:418px;background:#fff;overflow:hidden;box-shadow:0 1px 2px rgba(0,0,0,.6);"><div style="position:absolute;left:646px;top:0px;width:97px;height:418px;background:#3c6eb4;"></div><div style="position:absolute;left:743px;top:0px;width:1px;height:418px;background:#c8c8c8;"></div><div style="position:absolute;left:666px;top:35px;width:54px;height:54px;background:#fff;border-radius:50% 50% 50% 12%;"></div><svg style="position:absolute;left:666px;top:35px;" width="54" height="54" viewBox="0 0 54 54"><path d="M40 18.500a6.500 6.500 0 10-13 0V33a8 8 0 11-8-8h13.500" stroke="#3c6eb4" stroke-width="4.600" fill="none" stroke-linecap="round"/></svg><span style="position:absolute;left:52.6px;top:43px;font:400 27px/34px 'Liberation Sans',sans-serif;color:#51a2da;white-space:pre;letter-spacing:0.304px;">One does not simply bring the cat back</span><span style="position:absolute;left:52.6px;top:83px;font:400 14px/20px 'Liberation Sans',sans-serif;color:#3d4f80;white-space:pre;letter-spacing:0.021px;">It takes consideration and planning.</span><span style="position:absolute;left:57.8px;top:113px;font:400 15.5px/21px 'Liberation Sans',sans-serif;color:#4c5a86;white-space:pre;">1)</span><span style="position:absolute;left:79.4px;top:113px;font:400 15.5px/21px 'Liberation Sans',sans-serif;color:#7d8087;white-space:pre;letter-spacing:0.131px;">I first tried rebuilding using props from the template, but</span><span style="position:absolute;left:57.8px;top:150px;font:400 15.5px/21px 'Liberation Sans',sans-serif;color:#4c5a86;white-space:pre;">2)</span><span style="position:absolute;left:79.4px;top:150px;font:400 15.5px/21px 'Liberation Sans',sans-serif;color:#7d8087;white-space:pre;letter-spacing:0.070px;">Neither myself nor the mentors were feeling this one,</span><span style="position:absolute;left:79.4px;top:170px;font:400 15.5px/21px 'Liberation Sans',sans-serif;color:#7d8087;white-space:pre;letter-spacing:-0.139px;">so Marie suggested some examples.</span><span style="position:absolute;left:57.8px;top:207px;font:400 15.5px/21px 'Liberation Sans',sans-serif;color:#4c5a86;white-space:pre;">3)</span><span style="position:absolute;left:79.4px;top:207px;font:400 15.5px/21px 'Liberation Sans',sans-serif;color:#7d8087;white-space:pre;letter-spacing:-0.105px;">I then used these examples and several iterations, to</span><span style="position:absolute;left:79.4px;top:228px;font:400 15.5px/21px 'Liberation Sans',sans-serif;color:#7d8087;white-space:pre;letter-spacing:0.148px;">come up with the final design.</span><div style="position:absolute;left:542px;top:70px;width:61px;height:61px;background:#f0edb4;border:5px solid #e59728;border-radius:50%;"></div><svg style="position:absolute;left:542px;top:70px;" width="61" height="61" viewBox="0 0 61 61"><path d="M22 34c2-5 8-5 12-7l12-8 4 10-14 8c-4 2-9 4-12 2z" fill="#e59728"/><rect x="17" y="38" width="12" height="10" fill="#e8c690" stroke="#b97a1e" stroke-width="1"/></svg><div style="position:absolute;left:225px;top:266px;width:135px;height:135px;background:radial-gradient(circle at 50% 45%,#fff 0,#fdf3e3 45%,#f6d7a8 75%,#f0c080 100%);border:10px solid #e59728;border-radius:50% 50% 50% 17%;"></div><svg style="position:absolute;left:225px;top:266px;" width="135" height="135" viewBox="0 0 135 135"><path d="M52 12h32c1 10 3 18 0 26-1 4-4 3-5 6-2 3-4 3-6 0-2 4-6 4-8 0-2 4-6 3-7-1-4-2-6-6-5-12z" fill="#7a5a40"/><path d="M58 18c6-2 14-2 20 0M58 28c6-2 14-2 20 0" stroke="#5a3f2b" stroke-width="4" stroke-linecap="round" fill="none"/><rect x="43" y="67" width="44" height="41" fill="#fbf0dc" stroke="#a86a12" stroke-width="1.500"/><rect x="47" y="72" width="36" height="9" fill="#e5c89a"/><rect x="47" y="83" width="36" height="21" fill="#d39a42"/><rect x="66" y="63" width="13" height="17" fill="#e59728"/></svg><div style="position:absolute;left:393px;top:282px;width:120px;height:120px;background:#e3e394;border:10px solid #e59728;border-radius:50% 50% 50% 17%;"></div></div><div style="position:absolute;left:205px;top:683px;width:770px;height:1px;background:#4a4d50;"></div><div style="position:absolute;left:460px;top:689px;width:300px;height:8px;background:#4a4e52;border-radius:4px;border:1px solid #5a5e62;"></div><svg style="position:absolute;left:1006px;top:159px;" width="4" height="18" viewBox="0 0 4 18"><rect x="0.500" y="0" width="2" height="2" fill="#d0d0d0"/><rect x="0.500" y="4" width="2" height="2" fill="#d0d0d0"/><rect x="0.500" y="8" width="2" height="2" fill="#d0d0d0"/><rect x="0.500" y="12" width="2" height="2" fill="#d0d0d0"/><rect x="0.500" y="16" width="2" height="2" fill="#d0d0d0"/></svg><span style="position:absolute;left:1015px;top:159px;font:700 13.5px/19px 'Liberation Sans',sans-serif;color:#fcfcfc;white-space:pre;letter-spacing:0.135px;">Properties</span><span style="position:absolute;left:1434px;top:160px;font:400 11px/16px 'Liberation Sans',sans-serif;color:#fcfcfc;white-space:pre;">?</span><svg style="position:absolute;left:1453px;top:163px;" width="10" height="10" viewBox="0 0 10 10"><path d="M1 1l8 8M9 1l-8 8" stroke="#fcfcfc" stroke-width="1.300"/></svg><svg style="position:absolute;left:1480px;top:161px;" width="11" height="9" viewBox="0 0 11 9"><path d="M0 1h11M0 4.500h11M0 8h11" stroke="#d0d0d0" stroke-width="1.300"/></svg><div style="position:absolute;left:1004px;top:185px;width:440px;height:32px;background:#0f1214;"></div><svg style="position:absolute;left:1010px;top:194px;" width="16" height="12" viewBox="0 0 16 12"><path d="M2 4l4.500 4.500L11 4" stroke="#fcfcfc" stroke-width="1.300" fill="none"/><path d="M11 6h5M6.500 0v3" stroke="#6a6d70" stroke-width="1"/></svg><span style="position:absolute;left:1032px;top:192px;font:700 13.5px/19px 'Liberation Sans',sans-serif;color:#fcfcfc;white-space:pre;letter-spacing:-0.566px;">Slide</span><svg style="position:absolute;left:1420px;top:195px;" width="11" height="11" viewBox="0 0 11 11"><path d="M1 1v-0h0M1 8V1h7M4 4l6 6M10 5v5H5" stroke="#b8babc" stroke-width="1.300" fill="none"/></svg><span style="position:absolute;left:580px;width:600px;text-align:right;top:230px;font:400 13.3px/19px 'Liberation Sans',sans-serif;color:#fcfcfc;white-space:pre;">Format:</span><div style="position:absolute;left:1132px;top:246px;width:8px;height:1px;background:#fcfcfc;"></div><div style="position:absolute;left:1187px;top:224px;width:151px;height:30px;border:1px solid #54575b;border-radius:5px;background:#202326;"></div><span style="position:absolute;left:1193px;top:230px;font:400 13.1px/19px 'Liberation Sans',sans-serif;color:#fcfcfc;white-space:pre;">Widescreen</span><svg style="position:absolute;left:1322px;top:235px;" width="10" height="7" viewBox="0 0 10 7"><path d="M0.500 1l4.500 4.500L9.500 1" stroke="#fcfcfc" stroke-width="1.300" fill="none"/></svg><span style="position:absolute;left:580px;width:600px;text-align:right;top:265px;font:400 13.3px/19px 'Liberation Sans',sans-serif;color:#fcfcfc;white-space:pre;">Orientation:</span><div style="position:absolute;left:1187px;top:259px;width:151px;height:30px;border:1px solid #54575b;border-radius:5px;background:#202326;"></div><span style="position:absolute;left:1193px;top:265px;font:400 13.1px/19px 'Liberation Sans',sans-serif;color:#fcfcfc;white-space:pre;">Landscape</span><svg style="position:absolute;left:1322px;top:270px;" width="10" height="7" viewBox="0 0 10 7"><path d="M0.500 1l4.500 4.500L9.500 1" stroke="#fcfcfc" stroke-width="1.300" fill="none"/></svg><span style="position:absolute;left:580px;width:600px;text-align:right;top:300px;font:400 13.3px/19px 'Liberation Sans',sans-serif;color:#fcfcfc;white-space:pre;">Background:</span><div style="position:absolute;left:1187px;top:294px;width:151px;height:30px;border:1px solid #54575b;border-radius:5px;background:#202326;"></div><span style="position:absolute;left:1193px;top:300px;font:400 13.1px/19px 'Liberation Sans',sans-serif;color:#fcfcfc;white-space:pre;">None</span><svg style="position:absolute;left:1322px;top:305px;" width="10" height="7" viewBox="0 0 10 7"><path d="M0.500 1l4.500 4.500L9.500 1" stroke="#fcfcfc" stroke-width="1.300" fill="none"/></svg><div style="position:absolute;left:1187px;top:329px;width:151px;height:30px;border:1px solid #54575b;border-radius:5px;background:#202326;"></div><div style="position:absolute;left:1446px;top:186px;width:1px;height:200px;background:#3a3d41;"></div><div style="position:absolute;left:1452px;top:188px;width:8px;height:200px;background:#474b4f;border-radius:4px;"></div><div style="position:absolute;left:1469px;top:180px;width:32px;height:34px;background:#3a3d41;border:1px solid #54575a;border-radius:4px;"></div><svg style="position:absolute;left:1473px;top:185px;" width="24" height="24" viewBox="0 0 24 24"><rect x="2.500" y="3.500" width="19" height="17" rx="1" stroke="#d4d5d6" stroke-width="1.600" fill="none"/><path d="M2.500 7.500h19" stroke="#d4d5d6" stroke-width="1.600"/><path d="M6 12h12M6 16.500h12" stroke="#3daee9" stroke-width="1.400"/><path d="M10 10.500v3M14 15v3" stroke="#3daee9" stroke-width="1.600"/></svg><svg style="position:absolute;left:1473px;top:221px;" width="24" height="24" viewBox="0 0 24 24"><path d="M3 19L9.500 3l6.500 16M5.500 13.500h8" stroke="#e8e8e8" stroke-width="1.700" fill="none"/><path d="M21.500 8c-4 2-7 6-8 9.500l2 1.500c2.500-2.500 5-6.500 6-11z" stroke="#d4d5d6" stroke-width="1.200" fill="none"/><path d="M13 18c-1.500 0-3 1.500-3.500 3.500 2 .5 4.500 0 5.500-2z" fill="#3daee9"/></svg><svg style="position:absolute;left:1473px;top:257px;" width="24" height="24" viewBox="0 0 24 24"><path d="M2 19V3.500h6l2 2.500h9v3" stroke="#d98a26" stroke-width="1.400" fill="none"/><path d="M2 19.500l3-9h16l-3 9z" fill="#f5a33b"/><rect x="9.500" y="11.500" width="12" height="10" fill="#2f93d4" stroke="#d4d5d6" stroke-width="1.200"/><path d="M10.500 20.500l3.500-4 2.500 2.500 2-2 2 2.500v1z" fill="#e8e8e8"/></svg><svg style="position:absolute;left:1473px;top:292px;" width="24" height="24" viewBox="0 0 24 24"><circle cx="12" cy="12" r="9.500" stroke="#d4d5d6" stroke-width="1.600" fill="none"/><path d="M16.500 7.500l-3 6-6 3 3-6z" fill="#3daee9"/><circle cx="12" cy="12" r="1.200" fill="#202326"/></svg><svg style="position:absolute;left:1473px;top:328px;" width="24" height="24" viewBox="0 0 24 24"><circle cx="11" cy="11" r="6.500" stroke="#d4d5d6" stroke-width="1.600" fill="none"/></svg><div style="position:absolute;left:15px;top:704px;width:1491px;height:1px;background:#5c5f62;"></div><span style="position:absolute;left:20px;top:708px;font:400 13.3px/19px 'Liberation Sans',sans-serif;color:#fcfcfc;white-space:pre;letter-spacing:-0.487px;">Slide 21 of 25</span><span style="position:absolute;left:473px;top:708px;font:400 13.3px/19px 'Liberation Sans',sans-serif;color:#fcfcfc;white-space:pre;letter-spacing:-1.574px;">ONE_COLUMN_TEXT_</span>
<div style="position:absolute;left:638px;top:336px;width:1265px;height:684px;background:#2a2a2a;border-radius:6px 6px 2px 2px;box-shadow:0 0 0 1px rgba(0,0,0,.3),0 3px 12px rgba(0,0,0,.5);"></div><div style="position:absolute;left:642px;top:340px;width:140px;height:35px;background:#404040;"></div><svg style="position:absolute;left:658px;top:348px;" width="20" height="19" viewBox="0 0 20 19"><path d="M10 0.500l9.500 4.500L10 9.500.5 5z" fill="#fff"/><path d="M.5 8.500L10 13l9.500-4.500v2L10 15 .5 10.500z" fill="#fff" opacity=".7"/><path d="M.5 12.500L10 17l9.500-4.500v2L10 19 .5 14.500z" fill="#fff" opacity=".5"/></svg><span style="position:absolute;left:681px;top:349px;font:700 13.6px/19px 'Liberation Sans',sans-serif;color:#fff;white-space:pre;letter-spacing:-0.373px;">ONLYOFFICE</span><svg style="position:absolute;left:796px;top:348px;" width="19" height="19" viewBox="0 0 19 19"><rect width="19" height="19" rx="1.500" fill="#c55b44"/><rect x="3.500" y="4.500" width="12" height="9.500" fill="none" stroke="#fff" stroke-width="1.300"/></svg><span style="position:absolute;left:829px;top:348px;font:400 14.6px/20px 'Liberation Sans',sans-serif;color:#f0f0f0;white-space:pre;letter-spacing:-0.440px;">Luxury Or L…</span><div style="position:absolute;left:951px;top:340px;width:1px;height:35px;background:#454545;"></div><svg style="position:absolute;left:966px;top:348px;" width="19" height="19" viewBox="0 0 19 19"><rect width="19" height="19" rx="1.500" fill="#b5494f"/><rect x="4" y="6" width="4" height="3.500" fill="none" stroke="#fff" stroke-width="1.200"/><path d="M10.500 6.500h4.500M10.500 9h4.500M4 12.500h11" stroke="#fff" stroke-width="1.200"/></svg><span style="position:absolute;left:999px;top:348px;font:400 14.6px/20px 'Liberation Sans',sans-serif;color:#f0f0f0;white-space:pre;letter-spacing:-0.582px;">Document1…</span><div style="position:absolute;left:1121px;top:340px;width:1px;height:35px;background:#454545;"></div><svg style="position:absolute;left:1136px;top:348px;" width="19" height="19" viewBox="0 0 19 19"><rect width="19" height="19" rx="1.500" fill="#b5494f"/><rect x="4" y="6" width="4" height="3.500" fill="none" stroke="#fff" stroke-width="1.200"/><path d="M10.500 6.500h4.500M10.500 9h4.500M4 12.500h11" stroke="#fff" stroke-width="1.200"/></svg><span style="position:absolute;left:1169px;top:348px;font:400 14.6px/20px 'Liberation Sans',sans-serif;color:#f0f0f0;white-space:pre;letter-spacing:-0.469px;">Humanality …</span><div style="position:absolute;left:1291px;top:340px;width:1px;height:35px;background:#454545;"></div><svg style="position:absolute;left:1306px;top:348px;" width="19" height="19" viewBox="0 0 19 19"><rect width="19" height="19" rx="1.500" fill="#446995"/><path d="M4 6h11M4 9.500h11M4 13h11" stroke="#fff" stroke-width="1.300"/></svg><span style="position:absolute;left:1339px;top:348px;font:400 14.6px/20px 'Liberation Sans',sans-serif;color:#f0f0f0;white-space:pre;letter-spacing:-0.533px;">*Document…</span><div style="position:absolute;left:1461px;top:340px;width:1px;height:35px;background:#454545;"></div><svg style="position:absolute;left:929px;top:350px;" width="11" height="11" viewBox="0 0 11 11"><path d="M.5.5l10 10M10.500.5l-10 10" stroke="#eee" stroke-width="1.200"/></svg><svg style="position:absolute;left:1813px;top:347px;" width="16" height="16" viewBox="0 0 16 16"><path d="M-6 -3l6 6 6-6" stroke="#f0f0f0" stroke-width="1.500" fill="none" transform="translate(8 8)"/></svg><svg style="position:absolute;left:1844px;top:347px;" width="16" height="16" viewBox="0 0 16 16"><path d="M-6 3l6-6 6 6" stroke="#f0f0f0" stroke-width="1.500" fill="none" transform="translate(8 8)"/></svg><svg style="position:absolute;left:1876px;top:347px;" width="16" height="16" viewBox="0 0 16 16"><path d="M-5.500 -5.500l11 11M5.500 -5.500l-11 11" stroke="#f0f0f0" stroke-width="1.500" fill="none" transform="translate(8 8)"/></svg><svg style="position:absolute;left:659px;top:384px;" width="16" height="16" viewBox="0 0 16 16"><path d="M.6.6h11.400l3.400 3.400V15.400H.6z" stroke="#8a8a8a" stroke-width="1.25" fill="none" /><path d="M3.500 15V9h9v6" stroke="#8a8a8a" stroke-width="1.25" fill="none" /><rect x="3.500" y="1" width="6.500" height="3.500" fill="#8a8a8a"/></svg><svg style="position:absolute;left:708px;top:384px;" width="19" height="16" viewBox="0 0 19 16"><path d="M4.500 4.500v-4h10v4" stroke="#dcdcdc" stroke-width="1.25" fill="none" /><path d="M4.500 12h-4v-7.500h18V12h-4" stroke="#dcdcdc" stroke-width="1.25" fill="none" /><path d="M4.500 8.500h10v7h-10z" stroke="#dcdcdc" stroke-width="1.25" fill="none" /><rect x="2.500" y="6.500" width="1.300" height="1.300" fill="#dcdcdc"/></svg><svg style="position:absolute;left:758px;top:384px;" width="21" height="17" viewBox="0 0 21 17"><path d="M4.500 4.500v-4h10v4" stroke="#dcdcdc" stroke-width="1.25" fill="none" /><path d="M4.500 12h-4v-7.500h18V9" stroke="#dcdcdc" stroke-width="1.25" fill="none" /><path d="M13 15.500H4.500v-7h10" stroke="#dcdcdc" stroke-width="1.25" fill="none" /><circle cx="16" cy="12.500" r="4" fill="none" stroke="#dcdcdc" stroke-width="1.200"/><path d="M14 12.500l1.500 1.500 2.500-3" stroke="#dcdcdc" stroke-width="1.1" fill="none" /></svg><svg style="position:absolute;left:809px;top:384px;" width="17" height="16" viewBox="0 0 17 16"><path d="M6.500.8L1 6l5.500 5.200M1 6h10a5 5 0 010 10H6" stroke="#707070" stroke-width="1.3" fill="none" /></svg><svg style="position:absolute;left:858px;top:384px;" width="17" height="16" viewBox="0 0 17 16"><path d="M10.500.8L16 6l-5.500 5.200M16 6H6a5 5 0 000 10h5" stroke="#707070" stroke-width="1.3" fill="none" /></svg><svg style="position:absolute;left:909px;top:385px;" width="17" height="16" viewBox="0 0 17 16"><path d="M.6.6h15.800v14.800H.6z" stroke="#dcdcdc" stroke-width="1.25" fill="none" /><path d="M5 3.500v9l8-4.500z" fill="#dcdcdc"/></svg><span style="position:absolute;left:467px;width:1000px;text-align:center;top:382px;font:700 16px/21px 'Liberation Sans',sans-serif;color:#dcdcdc;white-space:pre;letter-spacing:1px;">···</span><span style="position:absolute;left:770px;width:1000px;text-align:center;top:382px;font:400 15px/21px 'Liberation Sans',sans-serif;color:#cfcfcf;white-space:pre;letter-spacing:-0.036px;">Luxury Or Lifeline.odp</span><div style="position:absolute;left:1862px;top:380px;width:24px;height:24px;background:#cfcfcf;border-radius:50%;"></div><span style="position:absolute;left:1374px;width:1000px;text-align:center;top:384px;font:400 12.5px/18px 'Liberation Sans',sans-serif;color:#333;white-space:pre;">R</span><div style="position:absolute;left:899px;top:410px;width:76px;height:35px;background:#404040;"></div><span style="position:absolute;left:657px;top:417px;font:400 15px/21px 'Liberation Sans',sans-serif;color:#e6e6e6;white-space:pre;letter-spacing:-0.057px;">File</span><span style="position:absolute;left:711px;top:417px;font:400 15px/21px 'Liberation Sans',sans-serif;color:#e6e6e6;white-space:pre;letter-spacing:-0.005px;">Home</span><span style="position:absolute;left:781px;top:417px;font:400 15px/21px 'Liberation Sans',sans-serif;color:#e6e6e6;white-space:pre;letter-spacing:0.097px;">Insert</span><span style="position:absolute;left:849px;top:417px;font:400 15px/21px 'Liberation Sans',sans-serif;color:#e6e6e6;white-space:pre;letter-spacing:-0.172px;">Draw</span><span style="position:absolute;left:914px;top:417px;font:400 15px/21px 'Liberation Sans',sans-serif;color:#e6e6e6;white-space:pre;letter-spacing:-0.141px;">Design</span><span style="position:absolute;left:991px;top:417px;font:400 15px/21px 'Liberation Sans',sans-serif;color:#e6e6e6;white-space:pre;letter-spacing:-0.081px;">Transitions</span><span style="position:absolute;left:1093.5px;top:417px;font:400 15px/21px 'Liberation Sans',sans-serif;color:#e6e6e6;white-space:pre;letter-spacing:-0.088px;">Animation</span><span style="position:absolute;left:1190px;top:417px;font:400 15px/21px 'Liberation Sans',sans-serif;color:#e6e6e6;white-space:pre;letter-spacing:-0.033px;">Collaboration</span><span style="position:absolute;left:1308.5px;top:417px;font:400 15px/21px 'Liberation Sans',sans-serif;color:#e6e6e6;white-space:pre;letter-spacing:-0.061px;">Protection</span><span style="position:absolute;left:1406px;top:417px;font:400 15px/21px 'Liberation Sans',sans-serif;color:#e6e6e6;white-space:pre;letter-spacing:-0.083px;">View</span><span style="position:absolute;left:1468px;top:417px;font:400 15px/21px 'Liberation Sans',sans-serif;color:#e6e6e6;white-space:pre;letter-spacing:-0.034px;">Plugins</span><span style="position:absolute;left:1547px;top:417px;font:400 15px/21px 'Liberation Sans',sans-serif;color:#e6e6e6;white-space:pre;letter-spacing:-0.188px;">AI</span><svg style="position:absolute;left:1814px;top:418px;" width="20" height="17" viewBox="0 0 20 17"><path d="M.6 16V.6h6l2 2.500h10.800V16z" stroke="#dcdcdc" stroke-width="1.25" fill="none" /><path d="M6 9.500h8M11 6.500l3 3-3 3" stroke="#dcdcdc" stroke-width="1.25" fill="none" /></svg><svg style="position:absolute;left:1865px;top:418px;" width="18" height="18" viewBox="0 0 18 18"><circle cx="7.500" cy="7.500" r="6.500" stroke="#dcdcdc" stroke-width="1.300" fill="none"/><path d="M12.500 12.500l5 5" stroke="#dcdcdc" stroke-width="1.4" fill="none" /></svg><div style="position:absolute;left:642px;top:445px;width:1257px;height:83px;background:#404040;"></div><div style="position:absolute;left:642px;top:528px;width:1257px;height:1px;background:#616161;"></div><svg style="position:absolute;left:659px;top:461px;" width="18" height="17" viewBox="0 0 18 17"><path d="M.6 .6h10v3.400M.6 .6v10h3.400" stroke="#dcdcdc" stroke-width="1.25" fill="none" /><path d="M4.600 4.600h12v11.800h-12z" stroke="#dcdcdc" stroke-width="1.25" fill="none" /><path d="M7 8h7.500M7 10.500h7.500M7 13h7.500" stroke="#dcdcdc" stroke-width="1.1" fill="none" /></svg><svg style="position:absolute;left:696px;top:460px;" width="20" height="17" viewBox="0 0 20 17"><path d="M19 1.500L5.500 10.500M19 15.500L5.500 6.500" stroke="#dcdcdc" stroke-width="1.2" fill="none" /><circle cx="3.300" cy="5" r="2.500" stroke="#dcdcdc" stroke-width="1.200" fill="none"/><circle cx="3.300" cy="12" r="2.500" stroke="#dcdcdc" stroke-width="1.200" fill="none"/></svg><svg style="position:absolute;left:659px;top:494px;" width="18" height="18" viewBox="0 0 18 18"><path d="M4 2.500H.6v13h4" stroke="#dcdcdc" stroke-width="1.25" fill="none" /><path d="M4 .6h6v3.500H4z" stroke="#dcdcdc" stroke-width="1.25" fill="none" /><path d="M10 2.500h3v2" stroke="#dcdcdc" stroke-width="1.25" fill="none" /><path d="M4.600 5.600h12v11.800h-12z" stroke="#dcdcdc" stroke-width="1.25" fill="none" /><path d="M7 9h7.500M7 11.500h7.500M7 14h7.500" stroke="#dcdcdc" stroke-width="1.1" fill="none" /></svg><svg style="position:absolute;left:697px;top:494px;" width="17" height="18" viewBox="0 0 17 18"><path d="M.6 .6h13v4.500H.6z" stroke="#8a8a8a" stroke-width="1.25" fill="none" /><path d="M13.600 3h2.500v4.500H7.500v3" stroke="#8a8a8a" stroke-width="1.25" fill="none" /><path d="M6 10.500h3v7H6z" stroke="#8a8a8a" stroke-width="1.25" fill="none" /></svg><div style="position:absolute;left:730px;top:454px;width:1px;height:64px;background:#555;"></div><svg style="position:absolute;left:755px;top:459px;" width="24" height="24" viewBox="0 0 24 24"><path d="M.6 .6h22.800v22.800H.6z" stroke="#dcdcdc" stroke-width="1.25" fill="none" /><path d="M12 6v12M6 12h12" stroke="#dcdcdc" stroke-width="1.6" fill="none" /></svg><span style="position:absolute;left:267px;width:1000px;text-align:center;top:485px;font:400 13.75px/19px 'Liberation Sans',sans-serif;color:#d9d9d9;white-space:pre;">Add</span><span style="position:absolute;left:260px;width:1000px;text-align:center;top:498px;font:400 13.75px/19px 'Liberation Sans',sans-serif;color:#d9d9d9;white-space:pre;">Slide</span><svg style="position:absolute;left:777.5px;top:505.5px;" width="9.0" height="7.0" viewBox="0 0 9.0 7.0"><path d="M1 1.5l3.5 3.5 3.5-3.5" stroke="#dcdcdc" stroke-width="1.250" fill="none"/></svg><svg style="position:absolute;left:813px;top:460px;" width="18" height="17" viewBox="0 0 18 17"><path d="M.6 .6h16.800v15.800H.6z" stroke="#dcdcdc" stroke-width="1.25" fill="none" /><path d="M3 3.500h12" stroke="#dcdcdc" stroke-width="1.4" fill="none" /><path d="M3 7h12M3 9.500h12M3 12h8" stroke="#dcdcdc" stroke-width="1.1" fill="none" /></svg><svg style="position:absolute;left:836.5px;top:464.5px;" width="9.0" height="7.0" viewBox="0 0 9.0 7.0"><path d="M1 1.5l3.5 3.5 3.5-3.5" stroke="#dcdcdc" stroke-width="1.250" fill="none"/></svg><svg style="position:absolute;left:813px;top:495px;" width="18" height="17" viewBox="0 0 18 17"><path d="M.6 .6h16.800v15.800H.6z" stroke="#dcdcdc" stroke-width="1.25" fill="none" /><path d="M5.500 3.500v10l8-5z" fill="#dcdcdc"/></svg><svg style="position:absolute;left:836.5px;top:499.5px;" width="9.0" height="7.0" viewBox="0 0 9.0 7.0"><path d="M1 1.5l3.5 3.5 3.5-3.5" stroke="#dcdcdc" stroke-width="1.250" fill="none"/></svg><div style="position:absolute;left:856px;top:454px;width:1px;height:64px;background:#555;"></div><div style="position:absolute;left:869px;top:457px;width:844px;height:57px;border:1px solid #5a5a5a;border-radius:2px;"></div><div style="position:absolute;left:871px;top:459px;width:113px;height:53px;background:#404040;border:1px solid #626262;"><div style="position:absolute;left:0.5px;top:0.5px;width:110px;height:50px;background:#fff;overflow:hidden;"><svg style="position:absolute;left:0px;top:0px;" width="110" height="50" viewBox="0 0 110 50"><g transform="scale(.9735 .9434)"><path d="M0 0h26C12 12 8 30 6 53H0z" fill="#4f81bd"/><path d="M30 53C60 50 90 45 113 40v13z" fill="#4f81bd"/></g></svg><span style="position:absolute;left:10px;top:7px;font:400 30px/37px 'Liberation Sans',sans-serif;color:#000;white-space:pre;letter-spacing:0.297px;">Aa</span><div style="position:absolute;left:4.5px;top:38.5px;width:53px;height:5.6px;background:#fff;"><div style="position:absolute;left:1.0px;top:1px;width:7.2px;height:3.6px;background:#4f81bd;"></div><div style="position:absolute;left:9.7px;top:1px;width:7.2px;height:3.6px;background:#c0504d;"></div><div style="position:absolute;left:18.4px;top:1px;width:7.2px;height:3.6px;background:#9bbb59;"></div><div style="position:absolute;left:27.099999999999998px;top:1px;width:7.2px;height:3.6px;background:#8064a2;"></div><div style="position:absolute;left:35.8px;top:1px;width:7.2px;height:3.6px;background:#4bacc6;"></div><div style="position:absolute;left:44.5px;top:1px;width:7.2px;height:3.6px;background:#f79646;"></div></div></div></div><div style="position:absolute;left:986px;top:459px;width:113px;height:53px;background:#404040;border:1px solid #626262;"><div style="position:absolute;left:0.5px;top:0.5px;width:110px;height:50px;background:#fff;overflow:hidden;"><svg style="position:absolute;left:0px;top:0px;" width="110" height="50" viewBox="0 0 110 50"><g transform="scale(.9735 .9434)"><path d="M4 30c8-10 30-14 50-12l8 14c14 0 30 4 45 18l2 3H40l-14-6-26 6z" fill="#d9d9d9"/></g></svg><span style="position:absolute;left:10px;top:7px;font:400 30px/37px 'Liberation Sans',sans-serif;color:#555;white-space:pre;letter-spacing:0.297px;">Aa</span><div style="position:absolute;left:4.5px;top:38.5px;width:53px;height:5.6px;background:#fff;"><div style="position:absolute;left:1.0px;top:1px;width:7.2px;height:3.6px;background:#4f81bd;"></div><div style="position:absolute;left:9.7px;top:1px;width:7.2px;height:3.6px;background:#c0504d;"></div><div style="position:absolute;left:18.4px;top:1px;width:7.2px;height:3.6px;background:#9bbb59;"></div><div style="position:absolute;left:27.099999999999998px;top:1px;width:7.2px;height:3.6px;background:#8064a2;"></div><div style="position:absolute;left:35.8px;top:1px;width:7.2px;height:3.6px;background:#4bacc6;"></div><div style="position:absolute;left:44.5px;top:1px;width:7.2px;height:3.6px;background:#f79646;"></div></div></div></div><div style="position:absolute;left:1101px;top:459px;width:113px;height:53px;background:#404040;border:1px solid #626262;"><div style="position:absolute;left:0.5px;top:0.5px;width:110px;height:50px;background:radial-gradient(ellipse 70% 70% at 50% 50%,#1a6fbd 0,#0f54a6 45%,#0b2d7a 85%,#0a1f5c 100%);overflow:hidden;"><svg style="position:absolute;left:0px;top:0px;" width="110" height="50" viewBox="0 0 110 50"><g transform="scale(.9735 .9434)"><path d="M0 0h3c6 10 8 22 12 30 12 4 40 6 55 14 8 4 12 8 16 9H0z" fill="#b5775c"/><path d="M3 0c6 10 8 22 12 30 12 4 40 6 55 14 8 4 12 8 16 9" stroke="#fff" stroke-width="1" fill="none"/><rect x="4" y="6" width="15" height="13" fill="#fff"/><path d="M10 6h9v13h-6z" fill="#111"/><g transform="translate(97 21) rotate(20)"><circle r="6.48" fill="none" stroke="#dc3d38" stroke-width="3.04"/><circle r="6.48" fill="none" stroke="#fff" stroke-width="3.04" stroke-dasharray="2.24 7.94" stroke-dashoffset="1.12"/><circle r="9.50" fill="none" stroke="#fff" stroke-width=".5" opacity=".7"/></g></g></svg><span style="position:absolute;left:23px;top:7px;font:700 3.6px/8px 'Liberation Sans',sans-serif;color:#dfe8f5;white-space:pre;letter-spacing:.9px;">CREATIVE FREEDOM:</span><span style="position:absolute;left:23px;top:13px;font:400 4.6px/9px 'Liberation Sans',sans-serif;color:#dfe8f5;white-space:pre;">LUXURY OR LIFELINE?</span><span style="position:absolute;left:10px;top:7px;font:400 30px/37px 'Liberation Sans',sans-serif;color:#000;white-space:pre;letter-spacing:0.297px;">Aa</span><div style="position:absolute;left:4.5px;top:38.5px;width:53px;height:5.6px;background:#fff;"><div style="position:absolute;left:1.0px;top:1px;width:7.2px;height:3.6px;background:#4f81bd;"></div><div style="position:absolute;left:9.7px;top:1px;width:7.2px;height:3.6px;background:#c0504d;"></div><div style="position:absolute;left:18.4px;top:1px;width:7.2px;height:3.6px;background:#9bbb59;"></div><div style="position:absolute;left:27.099999999999998px;top:1px;width:7.2px;height:3.6px;background:#8064a2;"></div><div style="position:absolute;left:35.8px;top:1px;width:7.2px;height:3.6px;background:#4bacc6;"></div><div style="position:absolute;left:44.5px;top:1px;width:7.2px;height:3.6px;background:#f79646;"></div></div></div></div><div style="position:absolute;left:1216px;top:459px;width:113px;height:53px;background:#404040;border:1px solid #626262;"><div style="position:absolute;left:0.5px;top:0.5px;width:110px;height:50px;background:radial-gradient(ellipse 70% 70% at 55% 40%,#0f54a6 0,#0b2d7a 70%,#0a1f5c 100%);overflow:hidden;"><svg style="position:absolute;left:0px;top:0px;" width="110" height="50" viewBox="0 0 110 50"><g transform="scale(.9735 .9434)"><path d="M0 0h2c10 9 16 12 18 22 2 12 6 20 22 24 20 2 40 4 50 7H0z" fill="#b5775c"/><path d="M2 0c10 9 16 12 18 22 2 12 6 20 22 24 20 2 40 4 50 7" stroke="#fff" stroke-width="1" fill="none"/><path d="M70 47c14 4 30 2 43-4v10H92z" fill="#2c2c33"/><path d="M70 46c14 5 30 3 43-4" stroke="#fff" stroke-width="1.200" fill="none"/><g transform="translate(105 9) rotate(20)"><circle r="2.59" fill="none" stroke="#dc3d38" stroke-width="1.22"/><circle r="2.59" fill="none" stroke="#fff" stroke-width="1.22" stroke-dasharray="0.90 3.18" stroke-dashoffset="0.45"/><circle r="4.70" fill="none" stroke="#fff" stroke-width=".5" opacity=".7"/></g></g></svg><span style="position:absolute;left:10px;top:7px;font:400 30px/37px 'Liberation Sans',sans-serif;color:#000;white-space:pre;letter-spacing:0.297px;">Aa</span><div style="position:absolute;left:4.5px;top:38.5px;width:53px;height:5.6px;background:#fff;"><div style="position:absolute;left:1.0px;top:1px;width:7.2px;height:3.6px;background:#4f81bd;"></div><div style="position:absolute;left:9.7px;top:1px;width:7.2px;height:3.6px;background:#c0504d;"></div><div style="position:absolute;left:18.4px;top:1px;width:7.2px;height:3.6px;background:#9bbb59;"></div><div style="position:absolute;left:27.099999999999998px;top:1px;width:7.2px;height:3.6px;background:#8064a2;"></div><div style="position:absolute;left:35.8px;top:1px;width:7.2px;height:3.6px;background:#4bacc6;"></div><div style="position:absolute;left:44.5px;top:1px;width:7.2px;height:3.6px;background:#f79646;"></div></div></div></div><div style="position:absolute;left:1331px;top:459px;width:113px;height:53px;background:#404040;border:1px solid #626262;"><div style="position:absolute;left:0.5px;top:0.5px;width:110px;height:50px;background:radial-gradient(ellipse 70% 70% at 50% 50%,#1a6fbd 0,#0f54a6 45%,#0b2d7a 85%,#0a1f5c 100%);overflow:hidden;"><svg style="position:absolute;left:0px;top:0px;" width="110" height="50" viewBox="0 0 110 50"><g transform="scale(.9735 .9434)"><path d="M0 0h2l6 8v38h64c10 2 14 6 20 7H0z" fill="#b5775c"/><path d="M72 46c14 5 28 3 41-3v10H92z" fill="#2c2c33"/><path d="M72 46c14 5 28 3 41-3" stroke="#fff" stroke-width="1.200" fill="none"/></g></svg><div style="position:absolute;left:4px;top:8px;width:104px;height:38px;background:#fff;border-radius:1px;"></div><svg style="position:absolute;left:0px;top:0px;" width="110" height="50" viewBox="0 0 110 50"><g transform="translate(106 8) rotate(20)"><circle r="2.59" fill="none" stroke="#dc3d38" stroke-width="1.22"/><circle r="2.59" fill="none" stroke="#fff" stroke-width="1.22" stroke-dasharray="0.90 3.18" stroke-dashoffset="0.45"/><circle r="4.70" fill="none" stroke="#fff" stroke-width=".5" opacity=".7"/></g></svg><span style="position:absolute;left:10px;top:7px;font:400 30px/37px 'Liberation Sans',sans-serif;color:#000;white-space:pre;letter-spacing:0.297px;">Aa</span><div style="position:absolute;left:4.5px;top:38.5px;width:53px;height:5.6px;background:#fff;"><div style="position:absolute;left:1.0px;top:1px;width:7.2px;height:3.6px;background:#4f81bd;"></div><div style="position:absolute;left:9.7px;top:1px;width:7.2px;height:3.6px;background:#c0504d;"></div><div style="position:absolute;left:18.4px;top:1px;width:7.2px;height:3.6px;background:#9bbb59;"></div><div style="position:absolute;left:27.099999999999998px;top:1px;width:7.2px;height:3.6px;background:#8064a2;"></div><div style="position:absolute;left:35.8px;top:1px;width:7.2px;height:3.6px;background:#4bacc6;"></div><div style="position:absolute;left:44.5px;top:1px;width:7.2px;height:3.6px;background:#f79646;"></div></div></div></div><div style="position:absolute;left:1446px;top:459px;width:113px;height:53px;background:#404040;border:1px solid #626262;"><div style="position:absolute;left:0.5px;top:0.5px;width:110px;height:50px;background:radial-gradient(ellipse 70% 70% at 50% 50%,#1a6fbd 0,#0f54a6 45%,#0b2d7a 85%,#0a1f5c 100%);overflow:hidden;"><svg style="position:absolute;left:0px;top:0px;" width="110" height="50" viewBox="0 0 110 50"><g transform="scale(.9735 .9434)"><path d="M0 0h2c10 9 16 12 18 22 2 12 6 20 22 24 20 2 40 4 50 7H0z" fill="#b5775c"/><path d="M2 0c10 9 16 12 18 22 2 12 6 20 22 24 20 2 40 4 50 7" stroke="#fff" stroke-width="1" fill="none"/><path d="M70 47c14 4 30 2 43-4v10H92z" fill="#2c2c33"/><path d="M70 46c14 5 30 3 43-4" stroke="#fff" stroke-width="1.200" fill="none"/><g transform="translate(105 9) rotate(20)"><circle r="2.59" fill="none" stroke="#dc3d38" stroke-width="1.22"/><circle r="2.59" fill="none" stroke="#fff" stroke-width="1.22" stroke-dasharray="0.90 3.18" stroke-dashoffset="0.45"/><circle r="4.70" fill="none" stroke="#fff" stroke-width=".5" opacity=".7"/></g></g></svg><span style="position:absolute;left:10px;top:7px;font:400 30px/37px 'Liberation Sans',sans-serif;color:#000;white-space:pre;letter-spacing:0.297px;">Aa</span><div style="position:absolute;left:4.5px;top:38.5px;width:53px;height:5.6px;background:#fff;"><div style="position:absolute;left:1.0px;top:1px;width:7.2px;height:3.6px;background:#4f81bd;"></div><div style="position:absolute;left:9.7px;top:1px;width:7.2px;height:3.6px;background:#c0504d;"></div><div style="position:absolute;left:18.4px;top:1px;width:7.2px;height:3.6px;background:#9bbb59;"></div><div style="position:absolute;left:27.099999999999998px;top:1px;width:7.2px;height:3.6px;background:#8064a2;"></div><div style="position:absolute;left:35.8px;top:1px;width:7.2px;height:3.6px;background:#4bacc6;"></div><div style="position:absolute;left:44.5px;top:1px;width:7.2px;height:3.6px;background:#f79646;"></div></div></div></div><div style="position:absolute;left:1561px;top:459px;width:113px;height:53px;background:#404040;border:2px solid #c4c4c4;"><div style="position:absolute;left:-0.5px;top:-0.5px;width:110px;height:50px;background:#fff;overflow:hidden;"><div style="position:absolute;left:0px;top:40.5px;width:110px;height:10px;background:#b5775c;"></div><svg style="position:absolute;left:0px;top:0px;" width="110" height="50" viewBox="0 0 110 50"><g transform="scale(.9735 .9434)"><path d="M62 43h51v-3c-10 5-30 6-51 3z" fill="#0b2f6c"/><path d="M64 43c10 2 18 8 49 10v-8c-14 5-30 2-49-2z" fill="#2c2c33"/><path d="M64 43c14 5 34 5 49 1" stroke="#fff" stroke-width="1.200" fill="none"/><path d="M64 43c10 2 20 9 49 10" stroke="#fff" stroke-width="1" fill="none"/></g></svg><span style="position:absolute;left:10px;top:7px;font:400 30px/37px 'Liberation Sans',sans-serif;color:#000;white-space:pre;letter-spacing:0.297px;">Aa</span><div style="position:absolute;left:4.5px;top:38.5px;width:53px;height:5.6px;background:#fff;"><div style="position:absolute;left:1.0px;top:1px;width:7.2px;height:3.6px;background:#4f81bd;"></div><div style="position:absolute;left:9.7px;top:1px;width:7.2px;height:3.6px;background:#c0504d;"></div><div style="position:absolute;left:18.4px;top:1px;width:7.2px;height:3.6px;background:#9bbb59;"></div><div style="position:absolute;left:27.099999999999998px;top:1px;width:7.2px;height:3.6px;background:#8064a2;"></div><div style="position:absolute;left:35.8px;top:1px;width:7.2px;height:3.6px;background:#4bacc6;"></div><div style="position:absolute;left:44.5px;top:1px;width:7.2px;height:3.6px;background:#f79646;"></div></div></div></div><div style="position:absolute;left:1676px;top:459px;width:36px;height:54px;background:#333;"></div><svg style="position:absolute;left:1684px;top:480px;" width="20" height="12" viewBox="0 0 20 12"><path d="M1.500 1.500l8.500 8.500 8.500-8.500" stroke="#e0e0e0" stroke-width="1.4" fill="none" /></svg><div style="position:absolute;left:1725px;top:454px;width:1px;height:64px;background:#555;"></div><svg style="position:absolute;left:1747px;top:460px;" width="24" height="24" viewBox="0 0 24 24"><rect x=".6" y=".6" width="22.800" height="22.800" fill="#5f5f5f" stroke="#dcdcdc" stroke-width="1.200"/><rect x="12" y="1.200" width="10.800" height="10.800" fill="#444"/><rect x="1.200" y="12" width="10.800" height="10.800" fill="#707070"/><rect x="12" y="12" width="10.800" height="10.800" fill="#9a9a9a"/></svg><span style="position:absolute;left:1259px;width:1000px;text-align:center;top:487px;font:400 13.75px/19px 'Liberation Sans',sans-serif;color:#d9d9d9;white-space:pre;letter-spacing:0.053px;">Colors</span><svg style="position:absolute;left:1754.5px;top:507.5px;" width="9.0" height="7.0" viewBox="0 0 9.0 7.0"><path d="M1 1.5l3.5 3.5 3.5-3.5" stroke="#dcdcdc" stroke-width="1.250" fill="none"/></svg><svg style="position:absolute;left:1799px;top:461px;" width="26" height="24" viewBox="0 0 26 24"><path d="M.6 .6v6M25.400 .6v6M.6 1.500h24.800" stroke="#dcdcdc" stroke-width="1.1" fill="none" /><path d="M1.500 5.600h23v17.800h-23z" stroke="#dcdcdc" stroke-width="1.25" fill="none" /></svg><span style="position:absolute;left:1311px;width:1000px;text-align:center;top:487px;font:400 13.75px/19px 'Liberation Sans',sans-serif;color:#d9d9d9;white-space:pre;">Slide</span><span style="position:absolute;left:1304px;width:1000px;text-align:center;top:501px;font:400 13.75px/19px 'Liberation Sans',sans-serif;color:#d9d9d9;white-space:pre;">size</span><svg style="position:absolute;left:1819.5px;top:508.5px;" width="9.0" height="7.0" viewBox="0 0 9.0 7.0"><path d="M1 1.5l3.5 3.5 3.5-3.5" stroke="#dcdcdc" stroke-width="1.250" fill="none"/></svg><div style="position:absolute;left:642px;top:529px;width:49px;height:457px;background:#404040;"></div><div style="position:absolute;left:691px;top:529px;width:1px;height:457px;background:#5a5a5a;"></div><svg style="position:absolute;left:656px;top:556px;" width="20" height="20" viewBox="0 0 20 20"><circle cx="8" cy="8" r="7.200" stroke="#dcdcdc" stroke-width="1.300" fill="none"/><path d="M13.500 13.500l6 6" stroke="#dcdcdc" stroke-width="1.4" fill="none" /></svg><div style="position:absolute;left:642px;top:594px;width:49px;height:37px;background:#6b6b6b;"></div><svg style="position:absolute;left:659px;top:602px;" width="16" height="20" viewBox="0 0 16 20"><path d="M.7 .7h14.600v18.600H.7z" stroke="#fff" stroke-width="1.4" fill="none" /><path d="M3 3.500h10v5.500H3zM3 11.500h10v5.500H3z" stroke="#fff" stroke-width="1.2" fill="none" /></svg><svg style="position:absolute;left:658px;top:653px;" width="18" height="17" viewBox="0 0 18 17"><path d="M.6 .6h16.800v11.400H6l-3 3.500v-3.500H.6z" stroke="#dcdcdc" stroke-width="1.25" fill="none" /><path d="M4 4.500h10M4 8h7" stroke="#dcdcdc" stroke-width="1.2" fill="none" /></svg><svg style="position:absolute;left:656px;top:699px;" width="21" height="18" viewBox="0 0 21 18"><path d="M.6 6h3.500l7.500-4.500v13L4.100 11H.6z" stroke="#dcdcdc" stroke-width="1.25" fill="none" /><path d="M4.100 11v4.500h2.500V11" stroke="#dcdcdc" stroke-width="1.1" fill="none" /><path d="M14.500 4c2 2.500 2 7 0 9.500M17 2c3 4 3 10 0 13.500" stroke="#dcdcdc" stroke-width="1.2" fill="none" /></svg><div style="position:absolute;left:692px;top:529px;width:324px;height:457px;background:#404040;"></div><div style="position:absolute;left:692px;top:529px;width:324px;height:457px;overflow:hidden;"><span style="position:absolute;left:-573.5px;width:600px;text-align:right;top:8px;font:400 16.5px/22px 'Liberation Sans',sans-serif;color:#fff;white-space:pre;">23</span><div style="position:absolute;left:35px;top:10px;width:258px;height:145px;overflow:hidden;"><div style="position:absolute;left:0px;top:0px;width:502px;height:282px;transform:scale(0.51394);transform-origin:0 0;"><div style="position:absolute;left:0px;top:0px;width:502px;height:282px;background:radial-gradient(ellipse 80% 90% at 45% 75%,#1565b4 0,#0f4d9e 40%,#0b2d78 80%,#0a1f5c 100%);"></div><svg style="position:absolute;left:0px;top:0px;" width="502" height="282" viewBox="0 0 502 282"><defs><linearGradient id="navy" x1="0" y1="0" x2="1" y2="0"><stop offset="0" stop-color="#0b2f6c"/><stop offset=".6" stop-color="#0a2a64"/><stop offset="1" stop-color="#060f38"/></linearGradient></defs><defs><radialGradient id="br23" cx=".6" cy=".95" r=".8"><stop offset="0" stop-color="#cb9075"/><stop offset=".45" stop-color="#b5775c"/><stop offset="1" stop-color="#9a5d44"/></radialGradient></defs><path d="M0,0 L6,0 C30,22 50,40 70,50 L70,228 L502,228 L502,282 L0,282 Z" fill="url(#br23)"/><path d="M4,0 C30,22 50,40 72,50" stroke="#fff" stroke-width="3.500" fill="none"/><rect x="306" y="225" width="196" height="14" fill="#0c3a86"/><path d="M288,238 C300,227 308,229 313.7,232 C325,238 335,243 342,247 C350,252 357,257 363.7,262 C372,267 380,270 388.7,272.8 C400,276 415,278 430,279 C455,280.5 480,281 502,281.5 L502,238 Z" fill="#fff"/><path d="M303,238 C316,230 326,238 342,243 C370,248 420,250 447,248.7 C470,247 490,242 502,235.7 L502,238 Z" fill="url(#navy)"/><path d="M342,247 C352,249 375,253 397,254.5 C420,255.5 450,254 480,248.7 C490,247 497,245 502,242.8 L502,280.8 C470,280 440,279 430,277.8 C410,275 395,272 389,269.5 C378,265 370,261 363.7,257.8 C355,253 350,250 342,247 Z" fill="#2c2c33"/></svg><div style="position:absolute;left:18px;top:46px;width:466px;height:190px;background:#fff;border-radius:6px;box-shadow:0 1px 3px rgba(0,0,0,.4);"></div><svg style="position:absolute;left:0px;top:0px;" width="502" height="282" viewBox="0 0 502 282"><g transform="translate(478 50) rotate(-22)"><circle r="12.96" fill="none" stroke="#dc3d38" stroke-width="6.08"/><circle r="12.96" fill="none" stroke="#fff" stroke-width="6.08" stroke-dasharray="4.48 15.88" stroke-dashoffset="2.24"/><circle r="17.50" fill="none" stroke="#fff" stroke-width=".5" opacity=".7"/></g></svg><div style="position:absolute;left:46px;top:96px;width:3.4px;height:3.4px;background:#1a1a1a;border-radius:50%;"></div><span style="position:absolute;left:61px;top:84px;font:700 14.2px/20px 'Liberation Sans',sans-serif;color:#000;white-space:pre;letter-spacing:1.214px;">Problem:</span><span style="position:absolute;left:136px;top:84px;font:400 14.2px/20px 'Liberation Sans',sans-serif;color:#1a1a1a;white-space:pre;letter-spacing:1.083px;">The cost</span><span style="position:absolute;left:203px;top:84px;font:400 14.2px/20px 'Liberation Sans',sans-serif;color:#f08a9b;white-space:pre;letter-spacing:1.110px;">(especially hidden costs)</span><span style="position:absolute;left:389px;top:84px;font:400 14.2px/20px 'Liberation Sans',sans-serif;color:#1a1a1a;white-space:pre;letter-spacing:1.638px;">of non-</span><span style="position:absolute;left:46px;top:115px;font:400 14.2px/20px 'Liberation Sans',sans-serif;color:#1a1a1a;white-space:pre;letter-spacing:1.158px;">free creative software is a barrier for those not</span><span style="position:absolute;left:46px;top:146px;font:400 14.2px/20px 'Liberation Sans',sans-serif;color:#1a1a1a;white-space:pre;letter-spacing:1.198px;">privileged to afford it.</span><div style="position:absolute;left:4px;top:255px;width:22px;height:24px;background:linear-gradient(90deg,#fff 35%,#111 35%);"></div><span style="position:absolute;left:31px;top:255px;font:700 5.6px/10px 'Liberation Sans',sans-serif;color:#fff;white-space:pre;letter-spacing:1.5px;">CREATIVE FREEDOM:</span><span style="position:absolute;left:31px;top:266px;font:700 7.5px/13px 'Liberation Sans',sans-serif;color:#fff;white-space:pre;">LUXURY OR LIFELINE?</span><span style="position:absolute;left:-106px;width:600px;text-align:right;top:257px;font:700 6.5px/11px 'Liberation Sans',sans-serif;color:#fff;white-space:pre;">ROLAND L. TAYLOR</span><span style="position:absolute;left:-106px;width:600px;text-align:right;top:267px;font:700 4.5px/9px 'Liberation Sans',sans-serif;color:#fff;white-space:pre;letter-spacing:1px;">ROLANDIXOR•PRO</span></div><div style="position:absolute;left:0px;top:0px;width:258px;height:145px;border:1px solid #cfcfcf;"></div></div><div style="position:absolute;left:29px;top:175px;width:271px;height:158px;border:4px solid #c2c2c2;background:#666;"></div><span style="position:absolute;left:-573.5px;width:600px;text-align:right;top:180px;font:400 16.5px/22px 'Liberation Sans',sans-serif;color:#fff;white-space:pre;">24</span><div style="position:absolute;left:35px;top:182px;width:258px;height:145px;overflow:hidden;"><div style="position:absolute;left:0px;top:0px;width:502px;height:282px;transform:scale(0.51394);transform-origin:0 0;"><div style="position:absolute;left:0px;top:0px;width:502px;height:282px;background:radial-gradient(ellipse 60% 90% at 55% 85%,#cb9075 0,#b5775c 45%,#9a5d44 100%);"></div><svg style="position:absolute;left:0px;top:0px;" width="502" height="282" viewBox="0 0 502 282"><defs><linearGradient id="navy" x1="0" y1="0" x2="1" y2="0"><stop offset="0" stop-color="#0b2f6c"/><stop offset=".6" stop-color="#0a2a64"/><stop offset="1" stop-color="#060f38"/></linearGradient></defs><rect x="470" y="205" width="32" height="24" fill="#071548"/><path d="M288,226 C300,227 308,229 313.7,232 C325,238 335,243 342,247 C350,252 357,257 363.7,262 C372,267 380,270 388.7,272.8 C400,276 415,278 430,279 C455,280.5 480,281 502,281.5 L502,226 Z" fill="#fff"/><path d="M303,226 C316,230 326,238 342,243 C370,248 420,250 447,248.7 C470,247 490,242 502,235.7 L502,226 Z" fill="url(#navy)"/><path d="M342,247 C352,249 375,253 397,254.5 C420,255.5 450,254 480,248.7 C490,247 497,245 502,242.8 L502,280.8 C470,280 440,279 430,277.8 C410,275 395,272 389,269.5 C378,265 370,261 363.7,257.8 C355,253 350,250 342,247 Z" fill="#2c2c33"/></svg><div style="position:absolute;left:0px;top:0px;width:502px;height:226px;background:#fff;border-radius:0 0 14px 11px;"></div><svg style="position:absolute;left:0px;top:0px;" width="502" height="282" viewBox="0 0 502 282"><g transform="translate(184 246.5) rotate(-22)"><circle r="19.04" fill="none" stroke="#dc3d38" stroke-width="8.93"/><circle r="19.04" fill="none" stroke="#fff" stroke-width="8.93" stroke-dasharray="6.58 23.32" stroke-dashoffset="3.29"/><circle r="25.00" fill="none" stroke="#fff" stroke-width=".5" opacity=".7"/></g></svg><div style="position:absolute;left:45.3px;top:17.7px;width:4.2px;height:4.2px;background:#111;border-radius:50%;"></div><span style="position:absolute;left:62.5px;top:9px;font:400 13.6px/19px 'Liberation Sans',sans-serif;color:#111;white-space:pre;letter-spacing:-0.269px;">Software costs are</span><span style="position:absolute;left:174.5px;top:9px;font:700 13.6px/19px 'Liberation Sans',sans-serif;color:#111;white-space:pre;letter-spacing:-0.042px;">*rising*</span><span style="position:absolute;left:223px;top:9px;font:400 13.6px/19px 'Liberation Sans',sans-serif;color:#111;white-space:pre;">.</span><div style="position:absolute;left:45.3px;top:54.7px;width:4.2px;height:4.2px;background:#111;border-radius:50%;"></div><span style="position:absolute;left:62.5px;top:46px;font:400 13.6px/19px 'Liberation Sans',sans-serif;color:#111;white-space:pre;letter-spacing:-0.174px;">Subscription models are</span><span style="position:absolute;left:45px;top:74px;font:400 13.6px/19px 'Liberation Sans',sans-serif;color:#111;white-space:pre;letter-spacing:-0.113px;">increasingly the ONLY way to</span><span style="position:absolute;left:45px;top:102px;font:400 13.6px/19px 'Liberation Sans',sans-serif;color:#111;white-space:pre;letter-spacing:-0.141px;">access creative tools.</span><div style="position:absolute;left:45.3px;top:147.7px;width:4.2px;height:4.2px;background:#111;border-radius:50%;"></div><span style="position:absolute;left:62.5px;top:139px;font:400 13.6px/19px 'Liberation Sans',sans-serif;color:#111;white-space:pre;letter-spacing:-0.229px;">Even one-time payment</span><span style="position:absolute;left:45px;top:167px;font:400 13.6px/19px 'Liberation Sans',sans-serif;color:#111;white-space:pre;letter-spacing:-0.161px;">models are at times becoming</span><span style="position:absolute;left:45px;top:195px;font:400 13.6px/19px 'Liberation Sans',sans-serif;color:#111;white-space:pre;letter-spacing:-0.176px;">restrictive.</span><div style="position:absolute;left:0px;top:0px;width:502px;height:226px;overflow:hidden;"><span style="position:absolute;left:291.5px;top:5px;font:700 6.3px/11px 'Liberation Sans',sans-serif;color:#222;white-space:pre;letter-spacing:0.165px;">COST OF ALOWKEY</span><span style="position:absolute;left:291.5px;top:15px;font:700 6.3px/11px 'Liberation Sans',sans-serif;color:#222;white-space:pre;letter-spacing:0.257px;">CREATIVE SHROUD ($/M)</span><div style="position:absolute;left:284px;top:16px;width:1px;height:179px;background:#333;"></div><div style="position:absolute;left:281px;top:191px;width:179px;height:1px;background:#333;"></div><span style="position:absolute;left:0px;top:-7px;font:700 6px/10px 'Liberation Sans',sans-serif;color:#bbb;white-space:pre;transform-origin:0 0;transform:translate(275px,138px) rotate(-90deg);letter-spacing:1px;">PRICE (BEFORE INSTALLATION)</span><span style="position:absolute;left:0px;top:-7px;font:700 6px/10px 'Liberation Sans',sans-serif;color:#222;white-space:pre;transform-origin:0 0;transform:translate(275px,138px) rotate(-90deg);letter-spacing:1px;">PRICE</span><div style="position:absolute;left:305px;top:150px;width:25px;height:36px;background:#6cc437;border-radius:7px;"></div><span style="position:absolute;left:-182.5px;width:1000px;text-align:center;top:153px;font:700 5.6px/10px 'Liberation Sans',sans-serif;color:#222;white-space:pre;letter-spacing:.8px;">$235</span><div style="position:absolute;left:343px;top:126px;width:25px;height:60px;background:#ff9c57;border-radius:7px;"></div><span style="position:absolute;left:-144.5px;width:1000px;text-align:center;top:130px;font:700 5.6px/10px 'Liberation Sans',sans-serif;color:#222;white-space:pre;letter-spacing:.8px;">$465</span><div style="position:absolute;left:381px;top:78px;width:25px;height:108px;background:#ff5757;border-radius:7px;"></div><span style="position:absolute;left:-106.5px;width:1000px;text-align:center;top:83px;font:700 5.6px/10px 'Liberation Sans',sans-serif;color:#222;white-space:pre;letter-spacing:.8px;">$1299</span><div style="position:absolute;left:419px;top:-10px;width:25px;height:196px;background:#000;border-radius:7px;"></div><span style="position:absolute;left:0px;top:-7px;font:700 5.2px/10px 'Liberation Sans',sans-serif;color:#fff;white-space:pre;transform-origin:0 0;transform:translate(426px,168px) rotate(-90deg);letter-spacing:.38px;">TOUGH LUCK MY GUY. SHOULDA BEEN BORN RICH! IN</span><div style="position:absolute;left:427px;top:167px;width:9px;height:8px;background:#f5a623;border-radius:3px 3px 1px 1px;"></div><div style="position:absolute;left:429.5px;top:165px;width:4px;height:4px;background:#f2c08a;border-radius:50%;"></div><svg style="position:absolute;left:318px;top:29px;" width="90" height="50" viewBox="0 0 90 50"><path d="M9 1h71a8 8 0 018 8v24a8 8 0 01-8 8H20l-12 8 2-8H9a8 8 0 01-8-8V9a8 8 0 018-8z" fill="#fff" stroke="#333" stroke-width="1"/></svg><span style="position:absolute;left:-137px;width:1000px;text-align:center;top:40px;font:700 6.3px/11px 'Liberation Sans',sans-serif;color:#222;white-space:pre;letter-spacing:.5px;">TEE-HEE! WHELP!</span><span style="position:absolute;left:-137px;width:1000px;text-align:center;top:52px;font:700 6.3px/11px 'Liberation Sans',sans-serif;color:#222;white-space:pre;letter-spacing:.5px;">THIS IS FINE!</span><svg style="position:absolute;left:291px;top:76px;" width="46" height="54" viewBox="0 0 46 54"><path d="M8 26c0 14 6 25 15 25s14-11 14-25z" fill="#fff" stroke="#999" stroke-width=".7"/><path d="M6 31c-5-2-7-10-2-14 0-7 7-11 12-8 3-6 12-6 15 0 6-2 11 3 10 9 4 3 4 11-2 13 0-6-2-10-5-12-6 3-18 3-23-1-3 3-5 7-5 13z" fill="#2b2b2b"/><path d="M23 32l1.500 6-1.500 1" stroke="#555" stroke-width=".6" fill="none"/><circle cx="15" cy="30" r=".6" fill="#444"/><circle cx="31" cy="30" r=".6" fill="#444"/></svg><span style="position:absolute;left:-140px;width:600px;text-align:right;top:192px;font:700 5.6px/10px 'Liberation Sans',sans-serif;color:#222;white-space:pre;letter-spacing:.5px;">YEAR</span><span style="position:absolute;left:289px;top:196px;font:700 4.6px/9px 'Liberation Sans',sans-serif;color:#333;white-space:pre;">PLEASE NOTE:</span><span style="position:absolute;left:323px;top:196px;font:700 4.6px/9px 'Liberation Sans',sans-serif;color:#bbb;white-space:pre;letter-spacing:.35px;">WE LIED. WHATEVER PRICE YOU SEE NOW,</span><span style="position:absolute;left:289px;top:203px;font:700 4.6px/9px 'Liberation Sans',sans-serif;color:#bbb;white-space:pre;letter-spacing:.35px;">WILL BE DOUBLED BY TOMORROW. NO REFUNDS.</span></div><span style="position:absolute;left:8px;top:236px;font:700 9.4px/15px 'Liberation Sans',sans-serif;color:#fff;white-space:pre;letter-spacing:2.418px;">CREATIVE FREEDOM:</span><span style="position:absolute;left:8px;top:256px;font:400 15px/20px 'Liberation Serif',serif;color:#fff;white-space:pre;letter-spacing:-1.534px;">LUXURY</span><span style="position:absolute;left:66.5px;top:262px;font:700 6.5px/11px 'Liberation Sans',sans-serif;color:#fff;white-space:pre;">OR</span><span style="position:absolute;left:81.5px;top:256px;font:700 14.4px/20px 'Liberation Sans',sans-serif;color:#fff;white-space:pre;letter-spacing:-0.906px;">LIFELINE?</span><span style="position:absolute;left:-112px;width:600px;text-align:right;top:260px;font:700 5.6px/10px 'Liberation Sans',sans-serif;color:#fff;white-space:pre;letter-spacing:2.639px;">ROLANDIXOR•PRO</span></div><div style="position:absolute;left:0px;top:0px;width:258px;height:145px;border:1px solid #cfcfcf;"></div></div><span style="position:absolute;left:-573.5px;width:600px;text-align:right;top:351px;font:400 16.5px/22px 'Liberation Sans',sans-serif;color:#fff;white-space:pre;">25</span><div style="position:absolute;left:35px;top:353px;width:258px;height:145px;overflow:hidden;"><div style="position:absolute;left:0px;top:0px;width:502px;height:282px;transform:scale(0.51394);transform-origin:0 0;"><div style="position:absolute;left:0px;top:0px;width:502px;height:282px;background:radial-gradient(ellipse 70% 70% at 50% 50%,#1a6fbd 0,#0f54a6 45%,#0b2d7a 85%,#0a1f5c 100%);"></div><svg style="position:absolute;left:0px;top:0px;" width="502" height="282" viewBox="0 0 502 282"><defs><linearGradient id="br25" x1="0" y1="0" x2="1" y2="0"><stop offset="0" stop-color="#9a5a40"/><stop offset=".25" stop-color="#a8654a"/><stop offset="1" stop-color="#cf957a"/></linearGradient></defs><path d="M0,0 L4,4 C40,40 68,52 76,95 C84,150 78,190 140,224 L160,282 L0,282 Z" fill="url(#br25)"/><path d="M2,4 C40,40 68,52 76,95 C84,150 80,195 145,226" stroke="#fff" stroke-width="4.500" fill="none"/><g transform="translate(478 49) rotate(20)"><circle r="11.34" fill="none" stroke="#dc3d38" stroke-width="5.32"/><circle r="11.34" fill="none" stroke="#fff" stroke-width="5.32" stroke-dasharray="3.92 13.89" stroke-dashoffset="1.96"/><circle r="15.50" fill="none" stroke="#fff" stroke-width=".5" opacity=".7"/></g></svg></div><div style="position:absolute;left:0px;top:0px;width:258px;height:145px;border:1px solid #cfcfcf;"></div></div></div><div style="position:absolute;left:998px;top:706px;width:11px;height:42px;border:1px solid #5a5a5a;border-radius:2px;background:#404040;"></div><div style="position:absolute;left:1001px;top:718px;width:5px;height:12px;background:repeating-linear-gradient(#6a6a6a 0 1px,transparent 1px 2px);"></div><div style="position:absolute;left:1016px;top:529px;width:558px;height:457px;background:#555555;"></div><div style="position:absolute;left:1016px;top:529px;width:2px;height:457px;background:#444;"></div><div style="position:absolute;left:1033px;top:573px;width:502px;height:282px;overflow:hidden;"><div style="position:absolute;left:0px;top:0px;width:502px;height:282px;background:radial-gradient(ellipse 60% 90% at 55% 85%,#cb9075 0,#b5775c 45%,#9a5d44 100%);"></div><svg style="position:absolute;left:0px;top:0px;" width="502" height="282" viewBox="0 0 502 282"><defs><linearGradient id="navy" x1="0" y1="0" x2="1" y2="0"><stop offset="0" stop-color="#0b2f6c"/><stop offset=".6" stop-color="#0a2a64"/><stop offset="1" stop-color="#060f38"/></linearGradient></defs><rect x="470" y="205" width="32" height="24" fill="#071548"/><path d="M288,226 C300,227 308,229 313.7,232 C325,238 335,243 342,247 C350,252 357,257 363.7,262 C372,267 380,270 388.7,272.8 C400,276 415,278 430,279 C455,280.5 480,281 502,281.5 L502,226 Z" fill="#fff"/><path d="M303,226 C316,230 326,238 342,243 C370,248 420,250 447,248.7 C470,247 490,242 502,235.7 L502,226 Z" fill="url(#navy)"/><path d="M342,247 C352,249 375,253 397,254.5 C420,255.5 450,254 480,248.7 C490,247 497,245 502,242.8 L502,280.8 C470,280 440,279 430,277.8 C410,275 395,272 389,269.5 C378,265 370,261 363.7,257.8 C355,253 350,250 342,247 Z" fill="#2c2c33"/></svg><div style="position:absolute;left:0px;top:0px;width:502px;height:226px;background:#fff;border-radius:0 0 14px 11px;"></div><svg style="position:absolute;left:0px;top:0px;" width="502" height="282" viewBox="0 0 502 282"><g transform="translate(184 246.5) rotate(-22)"><circle r="19.04" fill="none" stroke="#dc3d38" stroke-width="8.93"/><circle r="19.04" fill="none" stroke="#fff" stroke-width="8.93" stroke-dasharray="6.58 23.32" stroke-dashoffset="3.29"/><circle r="25.00" fill="none" stroke="#fff" stroke-width=".5" opacity=".7"/></g></svg><div style="position:absolute;left:45.3px;top:17.7px;width:4.2px;height:4.2px;background:#111;border-radius:50%;"></div><span style="position:absolute;left:62.5px;top:9px;font:400 13.6px/19px 'Liberation Sans',sans-serif;color:#111;white-space:pre;letter-spacing:-0.269px;">Software costs are</span><span style="position:absolute;left:174.5px;top:9px;font:700 13.6px/19px 'Liberation Sans',sans-serif;color:#111;white-space:pre;letter-spacing:-0.042px;">*rising*</span><span style="position:absolute;left:223px;top:9px;font:400 13.6px/19px 'Liberation Sans',sans-serif;color:#111;white-space:pre;">.</span><div style="position:absolute;left:45.3px;top:54.7px;width:4.2px;height:4.2px;background:#111;border-radius:50%;"></div><span style="position:absolute;left:62.5px;top:46px;font:400 13.6px/19px 'Liberation Sans',sans-serif;color:#111;white-space:pre;letter-spacing:-0.174px;">Subscription models are</span><span style="position:absolute;left:45px;top:74px;font:400 13.6px/19px 'Liberation Sans',sans-serif;color:#111;white-space:pre;letter-spacing:-0.113px;">increasingly the ONLY way to</span><span style="position:absolute;left:45px;top:102px;font:400 13.6px/19px 'Liberation Sans',sans-serif;color:#111;white-space:pre;letter-spacing:-0.141px;">access creative tools.</span><div style="position:absolute;left:45.3px;top:147.7px;width:4.2px;height:4.2px;background:#111;border-radius:50%;"></div><span style="position:absolute;left:62.5px;top:139px;font:400 13.6px/19px 'Liberation Sans',sans-serif;color:#111;white-space:pre;letter-spacing:-0.229px;">Even one-time payment</span><span style="position:absolute;left:45px;top:167px;font:400 13.6px/19px 'Liberation Sans',sans-serif;color:#111;white-space:pre;letter-spacing:-0.161px;">models are at times becoming</span><span style="position:absolute;left:45px;top:195px;font:400 13.6px/19px 'Liberation Sans',sans-serif;color:#111;white-space:pre;letter-spacing:-0.176px;">restrictive.</span><div style="position:absolute;left:0px;top:0px;width:502px;height:226px;overflow:hidden;"><span style="position:absolute;left:291.5px;top:5px;font:700 6.3px/11px 'Liberation Sans',sans-serif;color:#222;white-space:pre;letter-spacing:0.165px;">COST OF ALOWKEY</span><span style="position:absolute;left:291.5px;top:15px;font:700 6.3px/11px 'Liberation Sans',sans-serif;color:#222;white-space:pre;letter-spacing:0.257px;">CREATIVE SHROUD ($/M)</span><div style="position:absolute;left:284px;top:16px;width:1px;height:179px;background:#333;"></div><div style="position:absolute;left:281px;top:191px;width:179px;height:1px;background:#333;"></div><span style="position:absolute;left:0px;top:-7px;font:700 6px/10px 'Liberation Sans',sans-serif;color:#bbb;white-space:pre;transform-origin:0 0;transform:translate(275px,138px) rotate(-90deg);letter-spacing:1px;">PRICE (BEFORE INSTALLATION)</span><span style="position:absolute;left:0px;top:-7px;font:700 6px/10px 'Liberation Sans',sans-serif;color:#222;white-space:pre;transform-origin:0 0;transform:translate(275px,138px) rotate(-90deg);letter-spacing:1px;">PRICE</span><div style="position:absolute;left:305px;top:150px;width:25px;height:36px;background:#6cc437;border-radius:7px;"></div><span style="position:absolute;left:-182.5px;width:1000px;text-align:center;top:153px;font:700 5.6px/10px 'Liberation Sans',sans-serif;color:#222;white-space:pre;letter-spacing:.8px;">$235</span><div style="position:absolute;left:343px;top:126px;width:25px;height:60px;background:#ff9c57;border-radius:7px;"></div><span style="position:absolute;left:-144.5px;width:1000px;text-align:center;top:130px;font:700 5.6px/10px 'Liberation Sans',sans-serif;color:#222;white-space:pre;letter-spacing:.8px;">$465</span><div style="position:absolute;left:381px;top:78px;width:25px;height:108px;background:#ff5757;border-radius:7px;"></div><span style="position:absolute;left:-106.5px;width:1000px;text-align:center;top:83px;font:700 5.6px/10px 'Liberation Sans',sans-serif;color:#222;white-space:pre;letter-spacing:.8px;">$1299</span><div style="position:absolute;left:419px;top:-10px;width:25px;height:196px;background:#000;border-radius:7px;"></div><span style="position:absolute;left:0px;top:-7px;font:700 5.2px/10px 'Liberation Sans',sans-serif;color:#fff;white-space:pre;transform-origin:0 0;transform:translate(426px,168px) rotate(-90deg);letter-spacing:.38px;">TOUGH LUCK MY GUY. SHOULDA BEEN BORN RICH! IN</span><div style="position:absolute;left:427px;top:167px;width:9px;height:8px;background:#f5a623;border-radius:3px 3px 1px 1px;"></div><div style="position:absolute;left:429.5px;top:165px;width:4px;height:4px;background:#f2c08a;border-radius:50%;"></div><svg style="position:absolute;left:318px;top:29px;" width="90" height="50" viewBox="0 0 90 50"><path d="M9 1h71a8 8 0 018 8v24a8 8 0 01-8 8H20l-12 8 2-8H9a8 8 0 01-8-8V9a8 8 0 018-8z" fill="#fff" stroke="#333" stroke-width="1"/></svg><span style="position:absolute;left:-137px;width:1000px;text-align:center;top:40px;font:700 6.3px/11px 'Liberation Sans',sans-serif;color:#222;white-space:pre;letter-spacing:.5px;">TEE-HEE! WHELP!</span><span style="position:absolute;left:-137px;width:1000px;text-align:center;top:52px;font:700 6.3px/11px 'Liberation Sans',sans-serif;color:#222;white-space:pre;letter-spacing:.5px;">THIS IS FINE!</span><svg style="position:absolute;left:291px;top:76px;" width="46" height="54" viewBox="0 0 46 54"><path d="M8 26c0 14 6 25 15 25s14-11 14-25z" fill="#fff" stroke="#999" stroke-width=".7"/><path d="M6 31c-5-2-7-10-2-14 0-7 7-11 12-8 3-6 12-6 15 0 6-2 11 3 10 9 4 3 4 11-2 13 0-6-2-10-5-12-6 3-18 3-23-1-3 3-5 7-5 13z" fill="#2b2b2b"/><path d="M23 32l1.500 6-1.500 1" stroke="#555" stroke-width=".6" fill="none"/><circle cx="15" cy="30" r=".6" fill="#444"/><circle cx="31" cy="30" r=".6" fill="#444"/></svg><span style="position:absolute;left:-140px;width:600px;text-align:right;top:192px;font:700 5.6px/10px 'Liberation Sans',sans-serif;color:#222;white-space:pre;letter-spacing:.5px;">YEAR</span><span style="position:absolute;left:289px;top:196px;font:700 4.6px/9px 'Liberation Sans',sans-serif;color:#333;white-space:pre;">PLEASE NOTE:</span><span style="position:absolute;left:323px;top:196px;font:700 4.6px/9px 'Liberation Sans',sans-serif;color:#bbb;white-space:pre;letter-spacing:.35px;">WE LIED. WHATEVER PRICE YOU SEE NOW,</span><span style="position:absolute;left:289px;top:203px;font:700 4.6px/9px 'Liberation Sans',sans-serif;color:#bbb;white-space:pre;letter-spacing:.35px;">WILL BE DOUBLED BY TOMORROW. NO REFUNDS.</span></div><span style="position:absolute;left:8px;top:236px;font:700 9.4px/15px 'Liberation Sans',sans-serif;color:#fff;white-space:pre;letter-spacing:2.418px;">CREATIVE FREEDOM:</span><span style="position:absolute;left:8px;top:256px;font:400 15px/20px 'Liberation Serif',serif;color:#fff;white-space:pre;letter-spacing:-1.534px;">LUXURY</span><span style="position:absolute;left:66.5px;top:262px;font:700 6.5px/11px 'Liberation Sans',sans-serif;color:#fff;white-space:pre;">OR</span><span style="position:absolute;left:81.5px;top:256px;font:700 14.4px/20px 'Liberation Sans',sans-serif;color:#fff;white-space:pre;letter-spacing:-0.906px;">LIFELINE?</span><span style="position:absolute;left:-112px;width:600px;text-align:right;top:260px;font:700 5.6px/10px 'Liberation Sans',sans-serif;color:#fff;white-space:pre;letter-spacing:2.639px;">ROLANDIXOR•PRO</span></div><div style="position:absolute;left:1555px;top:531px;width:14px;height:14px;background:#444;border:1px solid #4e4e4e;"><svg style="position:absolute;left:-1px;top:-1px;" width="14" height="14" viewBox="0 0 14 14"><path d="M3.500 8.500l3.500-4 3.500 4z" fill="#cfcfcf"/></svg></div><div style="position:absolute;left:1555px;top:899px;width:14px;height:14px;background:#444;border:1px solid #4e4e4e;"><svg style="position:absolute;left:-1px;top:-1px;" width="14" height="14" viewBox="0 0 14 14"><path d="M3.500 5l3.500 4 3.500-4z" fill="#cfcfcf"/></svg></div><div style="position:absolute;left:1555px;top:680px;width:15px;height:42px;background:#444;border:1px solid #4e4e4e;border-radius:2px;"></div><div style="position:absolute;left:1560px;top:691px;width:5px;height:14px;background:repeating-linear-gradient(#6a6a6a 0 1px,transparent 1px 2px);"></div><div style="position:absolute;left:1018px;top:938px;width:556px;height:1px;background:#666;"></div><div style="position:absolute;left:1018px;top:939px;width:556px;height:47px;overflow:hidden;"><span style="position:absolute;left:51px;top:15px;font:400 32.5px/40px 'Liberation Sans',sans-serif;color:#fff;white-space:pre;letter-spacing:0.348px;">Through the use of restrictive</span></div><div style="position:absolute;left:1555px;top:942px;width:14px;height:14px;background:#444;border:1px solid #4e4e4e;"><svg style="position:absolute;left:-1px;top:-1px;" width="14" height="14" viewBox="0 0 14 14"><path d="M3.500 8.500l3.500-4 3.500 4z" fill="#cfcfcf"/></svg></div><div style="position:absolute;left:1555px;top:970px;width:14px;height:14px;background:#444;border:1px solid #4e4e4e;"><svg style="position:absolute;left:-1px;top:-1px;" width="14" height="14" viewBox="0 0 14 14"><path d="M3.500 5l3.500 4 3.500-4z" fill="#cfcfcf"/></svg></div><div style="position:absolute;left:1555px;top:958px;width:15px;height:5px;background:#444;border:1px solid #4e4e4e;"></div><div style="position:absolute;left:1574px;top:529px;width:275px;height:457px;background:#404040;"></div><div style="position:absolute;left:1574px;top:529px;width:1px;height:457px;background:#5a5a5a;"></div><div style="position:absolute;left:1848px;top:529px;width:1px;height:457px;background:#5a5a5a;"></div><div style="position:absolute;left:1849px;top:529px;width:50px;height:457px;background:#404040;"></div><span style="position:absolute;left:1593px;top:536px;font:700 13.75px/19px 'Liberation Sans',sans-serif;color:#e0e0e0;white-space:pre;letter-spacing:0.087px;">Background</span><div style="position:absolute;left:1593px;top:556px;width:243px;height:27px;background:#333;border:1px solid #5c5c5c;border-radius:2px;"></div><span style="position:absolute;left:1598px;top:561px;font:400 13.75px/19px 'Liberation Sans',sans-serif;color:#d9d9d9;white-space:pre;">Picture or Texture</span><svg style="position:absolute;left:1821.8px;top:567.3px;" width="8.4" height="6.4" viewBox="0 0 8.4 6.4"><path d="M1 1.2000000000000002l3.2 3.2 3.2-3.2" stroke="#dcdcdc" stroke-width="1.250" fill="none"/></svg><div style="position:absolute;left:1593px;top:594px;width:243px;height:27px;background:#333;border:1px solid #5c5c5c;border-radius:2px;"></div><span style="position:absolute;left:1214.5px;width:1000px;text-align:center;top:599px;font:400 13.75px/19px 'Liberation Sans',sans-serif;color:#d9d9d9;white-space:pre;">Select picture</span><svg style="position:absolute;left:1821.8px;top:605.3px;" width="8.4" height="6.4" viewBox="0 0 8.4 6.4"><path d="M1 1.2000000000000002l3.2 3.2 3.2-3.2" stroke="#dcdcdc" stroke-width="1.250" fill="none"/></svg><div style="position:absolute;left:1593px;top:631px;width:113px;height:27px;background:#333;border:1px solid #5c5c5c;border-radius:2px;"></div><span style="position:absolute;left:1598px;top:636px;font:400 13.75px/19px 'Liberation Sans',sans-serif;color:#d9d9d9;white-space:pre;">Stretch</span><svg style="position:absolute;left:1691.8px;top:642.3px;" width="8.4" height="6.4" viewBox="0 0 8.4 6.4"><path d="M1 1.2000000000000002l3.2 3.2 3.2-3.2" stroke="#dcdcdc" stroke-width="1.250" fill="none"/></svg><div style="position:absolute;left:1723px;top:631px;width:113px;height:100px;background:#333;border:1px solid #5c5c5c;border-radius:2px;"></div><div style="position:absolute;left:1749px;top:663px;width:63px;height:35px;background:#fff;overflow:hidden;"><div style="position:absolute;left:0px;top:28px;width:63px;height:7px;background:#b5775c;"></div><svg style="position:absolute;left:0px;top:0px;" width="63" height="35" viewBox="0 0 63 35"><path d="M36 28h27v4c-10 3-18 1-27-4z" fill="#0b2f6c"/><path d="M36 28c9 4 17 6 27 4v3H50z" fill="#ddd"/></svg></div><span style="position:absolute;left:1593px;top:684px;font:400 13.75px/19px 'Liberation Sans',sans-serif;color:#d9d9d9;white-space:pre;letter-spacing:-0.085px;">From texture</span><div style="position:absolute;left:1593px;top:703px;width:113px;height:28px;background:#333;border:1px solid #5c5c5c;border-radius:2px;"></div><span style="position:absolute;left:1598px;top:708px;font:400 13.75px/19px 'Liberation Sans',sans-serif;color:#d9d9d9;white-space:pre;">Select</span><svg style="position:absolute;left:1691.8px;top:714.8px;" width="8.4" height="6.4" viewBox="0 0 8.4 6.4"><path d="M1 1.2000000000000002l3.2 3.2 3.2-3.2" stroke="#dcdcdc" stroke-width="1.250" fill="none"/></svg><span style="position:absolute;left:1593px;top:741px;font:700 13.75px/19px 'Liberation Sans',sans-serif;color:#e0e0e0;white-space:pre;letter-spacing:0.094px;">Opacity</span><span style="position:absolute;left:1593px;top:765px;font:400 13.75px/19px 'Liberation Sans',sans-serif;color:#d9d9d9;white-space:pre;">0</span><div style="position:absolute;left:1609px;top:773px;width:100px;height:5px;background:#cfcfcf;border-radius:3px;"></div><div style="position:absolute;left:1695px;top:768px;width:15px;height:15px;background:#fff;border-radius:50%;"></div><span style="position:absolute;left:1720.5px;top:765px;font:400 13.75px/19px 'Liberation Sans',sans-serif;color:#d9d9d9;white-space:pre;">100</span><div style="position:absolute;left:1758px;top:761px;width:78px;height:27px;background:#333;border:1px solid #5c5c5c;border-radius:2px;"></div><span style="position:absolute;left:1764px;top:766px;font:400 13.75px/19px 'Liberation Sans',sans-serif;color:#d9d9d9;white-space:pre;">100 %</span><svg style="position:absolute;left:1820px;top:765.5px;" width="8" height="6" viewBox="0 0 8 6"><path d="M1 1l3 3 3-3" stroke="#dcdcdc" stroke-width="1.250" fill="none"/></svg><svg style="position:absolute;left:1820px;top:764px;" width="9" height="6" viewBox="0 0 9 6"><path d="M1 5l3.500-3.500L8 5" stroke="#dcdcdc" stroke-width="1.2" fill="none" /></svg><div style="position:absolute;left:1818px;top:762px;width:14px;height:9px;background:#333;"></div><svg style="position:absolute;left:1820px;top:765px;" width="9" height="6" viewBox="0 0 9 6"><path d="M1 5l3.500-3.500L8 5" stroke="#dcdcdc" stroke-width="1.2" fill="none" /></svg><svg style="position:absolute;left:1820px;top:778px;" width="9" height="6" viewBox="0 0 9 6"><path d="M1 1l3.500 3.500L8 1" stroke="#dcdcdc" stroke-width="1.2" fill="none" /></svg><div style="position:absolute;left:1593px;top:807px;width:18px;height:18px;background:#333;border:1px solid #5c5c5c;border-radius:2px;"></div><svg style="position:absolute;left:1596px;top:811px;" width="12" height="10" viewBox="0 0 12 10"><path d="M1 5l3.500 3.500L11 1.500" stroke="#f0f0f0" stroke-width="1.8" fill="none" /></svg><span style="position:absolute;left:1621px;top:807px;font:400 13.75px/19px 'Liberation Sans',sans-serif;color:#d9d9d9;white-space:pre;letter-spacing:-0.017px;">Show Background graphics</span><svg style="position:absolute;left:1596px;top:839px;" width="19" height="19" viewBox="0 0 19 19"><path d="M3.500 5.500A8 8 0 111.500 10" stroke="#8a8a8a" stroke-width="1.2" fill="none" /><path d="M3.800 1.500v4.300h4.300" stroke="#8a8a8a" stroke-width="1.2" fill="none" /></svg><span style="position:absolute;left:1623.5px;top:839px;font:400 13.75px/19px 'Liberation Sans',sans-serif;color:#8a8a8a;white-space:pre;letter-spacing:-0.075px;">Reset Background</span><svg style="position:absolute;left:1596px;top:875px;" width="20" height="17" viewBox="0 0 20 17"><path d="M.6 .6h14.800v10.800" stroke="#dcdcdc" stroke-width="1.2" fill="none" /><path d="M2.600 2.600h14.800v10.800" stroke="#dcdcdc" stroke-width="1.2" fill="none" /><path d="M4.600 5.100h14.800v10.800H4.600z" stroke="#dcdcdc" stroke-width="1.25" fill="#404040" /></svg><span style="position:absolute;left:1623.5px;top:874px;font:400 13.75px/19px 'Liberation Sans',sans-serif;color:#d9d9d9;white-space:pre;letter-spacing:-0.016px;">Apply to All Slides</span><div style="position:absolute;left:1593px;top:906px;width:243px;height:1px;background:#5a5a5a;"></div><div style="position:absolute;left:1593px;top:917px;width:18px;height:18px;background:#333;border:1px solid #5c5c5c;border-radius:2px;"></div><span style="position:absolute;left:1621px;top:917px;font:400 13.75px/19px 'Liberation Sans',sans-serif;color:#d9d9d9;white-space:pre;letter-spacing:0.004px;">Show slide number</span><div style="position:absolute;left:1593px;top:947px;width:18px;height:18px;background:#333;border:1px solid #5c5c5c;border-radius:2px;"></div><span style="position:absolute;left:1621px;top:947px;font:400 13.75px/19px 'Liberation Sans',sans-serif;color:#d9d9d9;white-space:pre;letter-spacing:-0.038px;">Show Date and Time</span><div style="position:absolute;left:1849px;top:547px;width:50px;height:37px;background:#6b6b6b;"></div><svg style="position:absolute;left:1864.6px;top:558.3px;" width="17.8" height="14.4" viewBox="0 0 21 17"><path d="M.7 .7h19.600v15.600H.7z" stroke="#fff" stroke-width="1.5" fill="none" /><path d="M3.700 3.700h13.600v9.600H3.700z" stroke="#fff" stroke-width="1.4" fill="none" /></svg><svg style="position:absolute;left:1864.6px;top:603.5px;" width="17.8" height="17.0" viewBox="0 0 21 20"><path d="M8 .6H.6V10H5" stroke="#9a9a9a" stroke-width="1.4" fill="none" /><circle cx="12.500" cy="11.500" r="7.200" stroke="#9a9a9a" stroke-width="1.400" fill="none"/></svg><svg style="position:absolute;left:1865.0px;top:651.9px;" width="17.0" height="16.1" viewBox="0 0 20 19"><path d="M.6 .6h18.800v17.800H.6z" stroke="#9a9a9a" stroke-width="1.4" fill="none" /><path d="M.6 14l5.500-5.500 5 4.500 3-2.500 5.300 4.500" stroke="#9a9a9a" stroke-width="1.4" fill="none" /><circle cx="5.500" cy="5.500" r="1.600" stroke="#9a9a9a" stroke-width="1.300" fill="none"/></svg><span style="position:absolute;left:1373.5px;width:1000px;text-align:center;top:695px;font:400 17.5px/24px 'Liberation Sans',sans-serif;color:#9a9a9a;white-space:pre;">¶</span><svg style="position:absolute;left:1864.6px;top:749.2px;" width="17.8" height="13.6" viewBox="0 0 21 16"><path d="M.6 .6h19.800v14.800H.6z" stroke="#9a9a9a" stroke-width="1.4" fill="none" /><path d="M.6 5.500h19.800M.6 10.500h19.800M7.200 .6v14.800M13.800 .6v14.800" stroke="#9a9a9a" stroke-width="1.4" fill="none" /><rect x=".6" y=".6" width="19.800" height="4" fill="#9a9a9a"/></svg><svg style="position:absolute;left:1865.4px;top:794.9px;" width="16.1" height="16.1" viewBox="0 0 19 19"><path d="M.7 12.500h4v5.800H.7zM7.200 7h4v11.300H7.200zM13.700 .7h4v17.600h-4z" stroke="#9a9a9a" stroke-width="1.4" fill="none" /></svg><span style="position:absolute;left:1373.5px;width:1000px;text-align:center;top:838px;font:400 14.5px/20px 'Liberation Sans',sans-serif;color:#9a9a9a;white-space:pre;">Ta</span><svg style="position:absolute;left:1867.5px;top:855.5px;" width="12" height="5" viewBox="0 0 12 5"><path d="M1 4.500c2.500-4.500 7.500-4.500 10 0" stroke="#9a9a9a" stroke-width="1.1" fill="none" /></svg><svg style="position:absolute;left:1864.2px;top:887.6px;" width="18.7" height="18.7" viewBox="0 0 22 22"><path d="M1.500 14c3-8 5-11 6.500-11s.5 6-2 12c-1.500 4-3.500 5-3.500 2 0-4 5-6 8-5" stroke="#9a9a9a" stroke-width="1.3" fill="none" /><path d="M11 20l1-4 7.500-10 2 1.500L14 18zM18 5l1.500-2 2 1.500-1.500 2" stroke="#9a9a9a" stroke-width="1.3" fill="none" /></svg><div style="position:absolute;left:642px;top:986px;width:1257px;height:31px;background:#404040;border-top:1px solid #5a5a5a;"></div><svg style="position:absolute;left:659px;top:993px;" width="17" height="16" viewBox="0 0 17 16"><path d="M.6 .6h15.800v14.800H.6z" stroke="#dcdcdc" stroke-width="1.25" fill="none" /><path d="M5 3.500v9l8-4.500z" fill="#dcdcdc"/></svg><svg style="position:absolute;left:683px;top:998px;" width="8" height="6" viewBox="0 0 8 6"><path d="M1 1l3 3 3-3" stroke="#dcdcdc" stroke-width="1.250" fill="none"/></svg><span style="position:absolute;left:703.5px;top:992px;font:400 13.75px/19px 'Liberation Sans',sans-serif;color:#d9d9d9;white-space:pre;letter-spacing:-0.084px;">Slide 24 of 54</span><span style="position:absolute;left:1432.5px;top:992px;font:400 13.75px/19px 'Liberation Sans',sans-serif;color:#6e6e6e;white-space:pre;letter-spacing:0.003px;">English – United States</span><svg style="position:absolute;left:1584px;top:998.5px;" width="8" height="6" viewBox="0 0 8 6"><path d="M1 1l3 3 3-3" stroke="#6e6e6e" stroke-width="1.250" fill="none"/></svg><svg style="position:absolute;left:1598px;top:991px;" width="21" height="21" viewBox="0 0 21 21"><circle cx="10.500" cy="10.500" r="9.500" stroke="#dcdcdc" stroke-width="1.200" fill="none"/><ellipse cx="10.500" cy="10.500" rx="4.500" ry="9.500" stroke="#dcdcdc" stroke-width="1.100" fill="none"/><path d="M1 10.500h19M2.500 5.500h16M2.500 15.500h16M10.500 1v19" stroke="#dcdcdc" stroke-width="1.1" fill="none" /></svg><div style="position:absolute;left:1626px;top:989px;width:25px;height:25px;background:#6b6b6b;"></div><span style="position:absolute;left:1138.5px;width:1000px;text-align:center;top:991px;font:400 7.5px/13px 'Liberation Sans',sans-serif;color:#fff;white-space:pre;letter-spacing:.3px;">ABC</span><svg style="position:absolute;left:1633px;top:1001px;" width="14" height="9" viewBox="0 0 14 9"><path d="M1 4l3.500 3.500L12.500 .5" stroke="#fff" stroke-width="1.4" fill="none" /></svg><div style="position:absolute;left:1659px;top:987px;width:1px;height:30px;background:#5a5a5a;"></div><div style="position:absolute;left:1667px;top:989px;width:25px;height:25px;background:#6b6b6b;"></div><svg style="position:absolute;left:1670px;top:992px;" width="19" height="19" viewBox="0 0 19 19"><path d="M.6 .6h17.800v17.800H.6z" stroke="#fff" stroke-width="1.2" fill="none" /><path d="M9.500 3.500v12M3.500 9.500h12M7.500 5.500l2-2 2 2M7.500 13.500l2 2 2-2M5.500 7.500l-2 2 2 2M13.500 7.500l2 2-2 2" stroke="#fff" stroke-width="1.1" fill="none" /></svg><svg style="position:absolute;left:1703px;top:993px;" width="22" height="16" viewBox="0 0 22 16"><path d="M.6 0v16M21.400 0v16M3 8h16M6 5L3 8l3 3M16 5l3 3-3 3" stroke="#dcdcdc" stroke-width="1.2" fill="none" /></svg><div style="position:absolute;left:1742px;top:1000.5px;width:14px;height:1.3px;background:#dcdcdc;"></div><span style="position:absolute;left:1778px;top:992px;font:400 13.75px/19px 'Liberation Sans',sans-serif;color:#d9d9d9;white-space:pre;letter-spacing:-0.071px;">Zoom 38%</span><svg style="position:absolute;left:1867px;top:993px;" width="15" height="15" viewBox="0 0 15 15"><path d="M7.500 0v15M0 7.500h15" stroke="#dcdcdc" stroke-width="1.3" fill="none" /></svg>
</div></body></html>
